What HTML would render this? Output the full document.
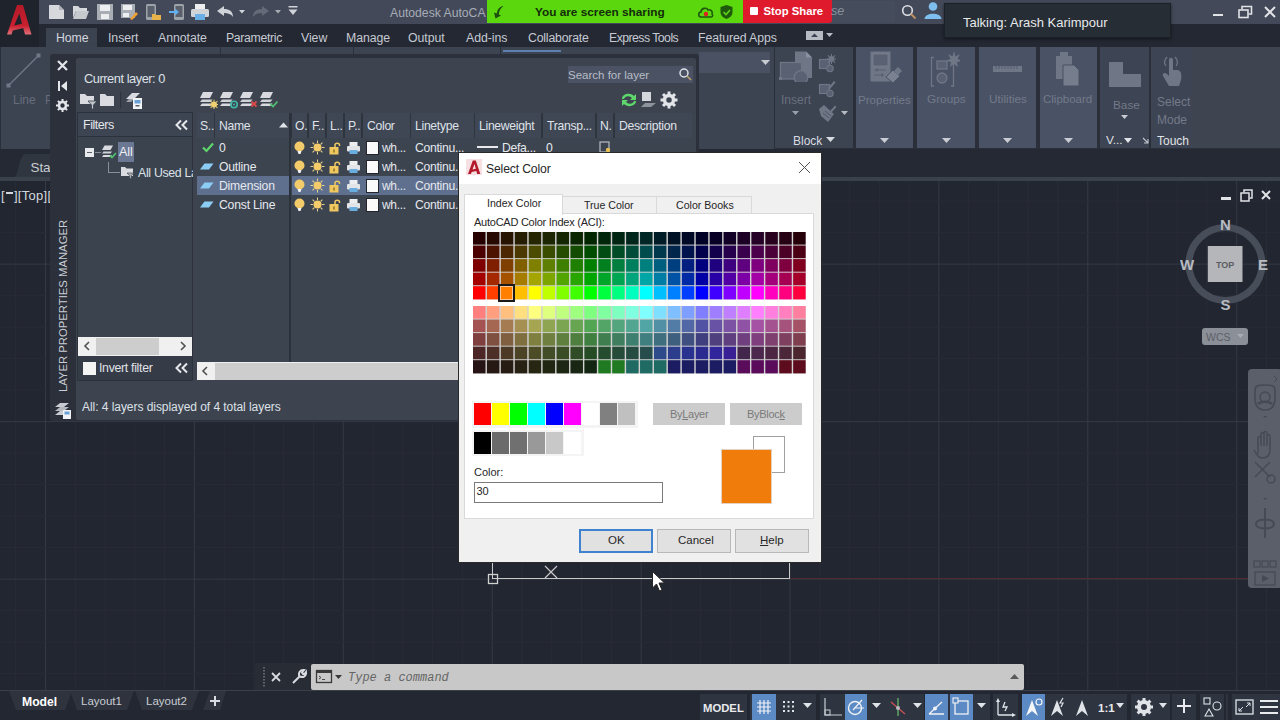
<!DOCTYPE html><html><head><meta charset="utf-8"><style>
html,body{margin:0;padding:0;}
body{width:1280px;height:720px;overflow:hidden;position:relative;background:#222630;font-family:"Liberation Sans",sans-serif;}
div,svg{box-sizing:border-box;}
</style></head><body>
<svg style="position:absolute;left:0px;top:0px;" width="1280" height="720" viewBox="0 0 1280 720"><rect x="15.2" y="181" width="1" height="510" fill="#282c37"/><rect x="74.8" y="181" width="1" height="510" fill="#282c37"/><rect x="104.6" y="181" width="1" height="510" fill="#282c37"/><rect x="134.3" y="181" width="1" height="510" fill="#282c37"/><rect x="164.1" y="181" width="1" height="510" fill="#282c37"/><rect x="45.0" y="181" width="1" height="510" fill="#343945"/><rect x="223.7" y="181" width="1" height="510" fill="#282c37"/><rect x="253.5" y="181" width="1" height="510" fill="#282c37"/><rect x="283.2" y="181" width="1" height="510" fill="#282c37"/><rect x="313.0" y="181" width="1" height="510" fill="#282c37"/><rect x="193.9" y="181" width="1" height="510" fill="#343945"/><rect x="372.6" y="181" width="1" height="510" fill="#282c37"/><rect x="402.4" y="181" width="1" height="510" fill="#282c37"/><rect x="432.1" y="181" width="1" height="510" fill="#282c37"/><rect x="461.9" y="181" width="1" height="510" fill="#282c37"/><rect x="342.8" y="181" width="1" height="510" fill="#343945"/><rect x="521.5" y="181" width="1" height="510" fill="#282c37"/><rect x="551.3" y="181" width="1" height="510" fill="#282c37"/><rect x="581.0" y="181" width="1" height="510" fill="#282c37"/><rect x="610.8" y="181" width="1" height="510" fill="#282c37"/><rect x="491.7" y="181" width="1" height="510" fill="#343945"/><rect x="670.4" y="181" width="1" height="510" fill="#282c37"/><rect x="700.2" y="181" width="1" height="510" fill="#282c37"/><rect x="729.9" y="181" width="1" height="510" fill="#282c37"/><rect x="759.7" y="181" width="1" height="510" fill="#282c37"/><rect x="640.6" y="181" width="1" height="510" fill="#343945"/><rect x="819.3" y="181" width="1" height="510" fill="#282c37"/><rect x="849.1" y="181" width="1" height="510" fill="#282c37"/><rect x="878.8" y="181" width="1" height="510" fill="#282c37"/><rect x="908.6" y="181" width="1" height="510" fill="#282c37"/><rect x="789.5" y="181" width="1" height="510" fill="#343945"/><rect x="968.2" y="181" width="1" height="510" fill="#282c37"/><rect x="998.0" y="181" width="1" height="510" fill="#282c37"/><rect x="1027.7" y="181" width="1" height="510" fill="#282c37"/><rect x="1057.5" y="181" width="1" height="510" fill="#282c37"/><rect x="938.4" y="181" width="1" height="510" fill="#343945"/><rect x="1117.1" y="181" width="1" height="510" fill="#282c37"/><rect x="1146.9" y="181" width="1" height="510" fill="#282c37"/><rect x="1176.6" y="181" width="1" height="510" fill="#282c37"/><rect x="1206.4" y="181" width="1" height="510" fill="#282c37"/><rect x="1087.3" y="181" width="1" height="510" fill="#343945"/><rect x="1266.0" y="181" width="1" height="510" fill="#282c37"/><rect x="1236.2" y="181" width="1" height="510" fill="#343945"/><rect x="0" y="200.6" width="1280" height="1" fill="#282c37"/><rect x="0" y="232.1" width="1280" height="1" fill="#282c37"/><rect x="0" y="295.1" width="1280" height="1" fill="#282c37"/><rect x="0" y="326.6" width="1280" height="1" fill="#282c37"/><rect x="0" y="358.1" width="1280" height="1" fill="#282c37"/><rect x="0" y="389.6" width="1280" height="1" fill="#282c37"/><rect x="0" y="263.6" width="1280" height="1" fill="#343945"/><rect x="0" y="452.6" width="1280" height="1" fill="#282c37"/><rect x="0" y="484.1" width="1280" height="1" fill="#282c37"/><rect x="0" y="515.6" width="1280" height="1" fill="#282c37"/><rect x="0" y="547.1" width="1280" height="1" fill="#282c37"/><rect x="0" y="421.1" width="1280" height="1" fill="#343945"/><rect x="0" y="610.1" width="1280" height="1" fill="#282c37"/><rect x="0" y="641.6" width="1280" height="1" fill="#282c37"/><rect x="0" y="673.1" width="1280" height="1" fill="#282c37"/><rect x="0" y="578.6" width="1280" height="1" fill="#343945"/></svg>
<div style="position:absolute;left:790px;top:578px;width:490px;height:1px;background:#552931;"></div>
<div style="position:absolute;left:492px;top:560px;width:1px;height:19px;background:#c9c9c9;"></div>
<div style="position:absolute;left:789px;top:560px;width:1px;height:19px;background:#c9c9c9;"></div>
<div style="position:absolute;left:492px;top:578px;width:298px;height:1px;background:#c9c9c9;"></div>
<svg style="position:absolute;left:486px;top:572px;" width="14" height="14" viewBox="0 0 14 14"><rect x="2.5" y="2.5" width="9" height="9" fill="none" stroke="#d0d0d0" stroke-width="1.3"/></svg>
<svg style="position:absolute;left:543px;top:564px;" width="16" height="16" viewBox="0 0 16 16"><path d="M2 2 L14 14 M14 2 L2 14" stroke="#c9c9c9" stroke-width="1.2"/></svg>
<div style="position:absolute;left:0px;top:0px;width:1280px;height:24px;background:#434958;"></div>
<div style="position:absolute;left:0px;top:24px;width:1280px;height:23px;background:#232832;"></div>
<div style="position:absolute;left:0px;top:0px;width:39px;height:47px;background:#1f232b;"></div>
<svg style="position:absolute;left:0px;top:0px;" width="39" height="40" viewBox="0 0 39 40"><defs><linearGradient id="lg" x1="0" y1="0" x2="0" y2="1"><stop offset="0" stop-color="#b51a28"/><stop offset="0.7" stop-color="#c9202f"/><stop offset="1" stop-color="#e0707a"/></linearGradient></defs><path d="M7 34.5 L17 5 H23 L31.5 34.5 H25 L23.2 28 L12.8 30.5 L11.5 34.5 Z M14.2 25.5 L22 23.8 L19.3 13.5 Z" fill="url(#lg)" fill-rule="evenodd"/></svg>
<svg style="position:absolute;left:48px;top:4px;" width="18" height="16" viewBox="0 0 18 16"><path d="M1 1 H11 L16 6 V15 H1 Z" fill="#d6d8dc"/><path d="M11 1 V6 H16" fill="#aeb2b8"/></svg>
<svg style="position:absolute;left:72px;top:4px;" width="18" height="16" viewBox="0 0 18 16"><path d="M1 2 H6 L8 4 H15 V7 H4 L1 14 Z" fill="#d6d8dc"/><path d="M4 7 H17 L14 15 H1 Z" fill="#c6c9ce"/></svg>
<svg style="position:absolute;left:96px;top:3px;" width="18" height="18" viewBox="0 0 18 18"><rect x="1" y="1" width="16" height="16" fill="#a9adb4"/><rect x="4" y="2" width="10" height="6" fill="#eceef0"/><rect x="5" y="11" width="8" height="5" fill="#eceef0"/></svg>
<svg style="position:absolute;left:120px;top:3px;" width="18" height="18" viewBox="0 0 18 18"><rect x="1" y="1" width="14" height="14" fill="#a9adb4"/><rect x="3" y="2" width="9" height="5" fill="#eceef0"/><rect x="3" y="10" width="6" height="4" fill="#eceef0"/><path d="M10 16 L16 9 L18 11 L12 17 Z" fill="#f0a030"/></svg>
<svg style="position:absolute;left:144px;top:3px;" width="18" height="18" viewBox="0 0 18 18"><rect x="2" y="1" width="10" height="16" rx="1.5" fill="#9ea3aa"/><rect x="3.5" y="3" width="7" height="11" fill="#5a606b"/><path d="M8 11 H11 L12 12 H17 V17 H8 Z" fill="#e8b24a"/></svg>
<svg style="position:absolute;left:168px;top:3px;" width="18" height="18" viewBox="0 0 18 18"><rect x="6" y="1" width="10" height="16" rx="1.5" fill="#9ea3aa"/><rect x="7.5" y="3" width="7" height="11" fill="#5a606b"/><path d="M1 8 H7 V5.5 L11 9 L7 12.5 V10 H1 Z" fill="#5fb0f0"/></svg>
<svg style="position:absolute;left:190px;top:3px;" width="20" height="18" viewBox="0 0 20 18"><rect x="5" y="1" width="10" height="5" fill="#eceef0"/><rect x="1" y="6" width="18" height="8" rx="1.5" fill="#d0d3d8"/><rect x="5" y="11" width="10" height="6" fill="#6aaee8"/></svg>
<svg style="position:absolute;left:216px;top:5px;" width="18" height="14" viewBox="0 0 18 14"><path d="M1 6 L8 1 V4 C13 4 17 6 17 12 C15 9 12 8 8 8 V11 Z" fill="#d0d3d8"/></svg>
<svg style="position:absolute;left:239px;top:10px;" width="6" height="4" viewBox="0 0 6 4"><path d="M0 0 H6 L3 3.5 Z" fill="#d0d3d8"/></svg>
<svg style="position:absolute;left:251px;top:5px;" width="19" height="14" viewBox="0 0 19 14"><path d="M18 6 L11 1 V4 C6 4 2 6 2 12 C4 9 7 8 11 8 V11 Z" fill="#646b78"/></svg>
<svg style="position:absolute;left:275px;top:10px;" width="6" height="4" viewBox="0 0 6 4"><path d="M0 0 H6 L3 3.5 Z" fill="#a9aeb6"/></svg>
<svg style="position:absolute;left:288px;top:5px;" width="10" height="12" viewBox="0 0 10 12"><rect x="0.5" y="1" width="9" height="1.5" fill="#d0d3d8"/><path d="M0.5 4.5 H9.5 L5 10 Z" fill="#d0d3d8"/></svg>
<div style="position:absolute;left:390px;top:6.67px;font-family:'Liberation Sans',sans-serif;font-size:12.2px;line-height:1;color:#a6acb7;font-weight:400;white-space:nowrap;">Autodesk AutoCA</div>
<div style="position:absolute;left:487px;top:0px;width:256px;height:23px;background:#5bd70e;"></div>
<svg style="position:absolute;left:492px;top:5px;" width="14" height="14" viewBox="0 0 14 14"><path d="M11.5 1 C7 1.5 5 5 5 8.5 L2 7.5 L3.5 13.5 L9 10.5 L6.8 9.6 C7 6 8.5 3 11.5 1 Z" fill="#1d4d0c"/></svg>
<div style="position:absolute;left:535px;top:6.51px;font-family:'Liberation Sans',sans-serif;font-size:11.8px;line-height:1;color:#132c0a;font-weight:700;white-space:nowrap;">You are screen sharing</div>
<svg style="position:absolute;left:697px;top:5px;" width="17" height="14" viewBox="0 0 17 14"><path d="M4 12 C1 12 1 7 4 7 C4 3 10 2 11 5 C14 4 16 7 15 9 C16 10 16 12 14 12 Z" fill="none" stroke="#1f5a0c" stroke-width="1.6"/><circle cx="9" cy="9" r="2.2" fill="#e02020"/></svg>
<svg style="position:absolute;left:719px;top:4px;" width="15" height="16" viewBox="0 0 15 16"><path d="M7.5 1 L13.5 3 V8 C13.5 12 10 14 7.5 15 C5 14 1.5 12 1.5 8 V3 Z" fill="#1f5a0c"/><path d="M4.5 8 L7 10.5 L11 6" stroke="#5fd31b" stroke-width="1.6" fill="none"/></svg>
<div style="position:absolute;left:743px;top:0px;width:89px;height:23px;background:#df1a2d;border-bottom-right-radius:3px;"></div>
<div style="position:absolute;left:750px;top:7px;width:8px;height:8px;background:#ffffff;border-radius:1px;"></div>
<div style="position:absolute;left:763.5px;top:5.93px;font-family:'Liberation Sans',sans-serif;font-size:11.3px;line-height:1;color:#ffffff;font-weight:700;white-space:nowrap;">Stop Share</div>
<div style="position:absolute;left:832px;top:1px;width:63px;height:21px;background:#454c5c;"></div>
<div style="position:absolute;left:831px;top:5.42px;font-family:'Liberation Sans',sans-serif;font-size:12.5px;line-height:1;color:#8a909c;font-weight:400;white-space:nowrap;font-style:italic;">se</div>
<svg style="position:absolute;left:901px;top:4px;" width="16" height="16" viewBox="0 0 16 16"><circle cx="6.5" cy="6.5" r="4.8" fill="none" stroke="#dcdfe4" stroke-width="1.6"/><path d="M10 10 L14.5 14.5" stroke="#c09060" stroke-width="1.8"/></svg>
<svg style="position:absolute;left:923px;top:1px;" width="20" height="19" viewBox="0 0 20 19"><circle cx="10" cy="5.5" r="4.3" fill="#7fbff0"/><path d="M1.5 18 C2 11 18 11 18.5 18 Z" fill="#7fbff0"/></svg>
<div style="position:absolute;left:944px;top:3px;width:227px;height:35px;background:#262d35;border:1px solid #1c2127;box-shadow:0 1px 3px rgba(0,0,0,0.5);"></div>
<div style="position:absolute;left:963px;top:16.00px;font-family:'Liberation Sans',sans-serif;font-size:13px;line-height:1;color:#e6e8ea;font-weight:400;white-space:nowrap;">Talking: Arash Karimpour</div>
<div style="position:absolute;left:1213px;top:14px;width:10px;height:2px;background:#e0e2e6;"></div>
<svg style="position:absolute;left:1238px;top:5px;" width="16" height="14" viewBox="0 0 16 14"><rect x="1" y="5" width="9" height="7.5" fill="none" stroke="#e0e2e6" stroke-width="1.6"/><path d="M4 4.5 V1.5 H13.5 V9 H10.5" fill="none" stroke="#e0e2e6" stroke-width="1.6"/></svg>
<svg style="position:absolute;left:1263px;top:5px;" width="14" height="14" viewBox="0 0 14 14"><path d="M2 2 L12 12 M12 2 L2 12" stroke="#e0e2e6" stroke-width="2"/></svg>
<div style="position:absolute;left:46px;top:28px;width:51px;height:19px;background:#3b4250;"></div>
<div style="position:absolute;left:56px;top:31.59px;font-family:'Liberation Sans',sans-serif;font-size:12.3px;line-height:1;color:#d3d7de;font-weight:400;white-space:nowrap;letter-spacing:-0.05px;">Home</div>
<div style="position:absolute;left:108px;top:31.59px;font-family:'Liberation Sans',sans-serif;font-size:12.3px;line-height:1;color:#c6cad2;font-weight:400;white-space:nowrap;letter-spacing:-0.05px;">Insert</div>
<div style="position:absolute;left:158px;top:31.59px;font-family:'Liberation Sans',sans-serif;font-size:12.3px;line-height:1;color:#c6cad2;font-weight:400;white-space:nowrap;letter-spacing:-0.05px;">Annotate</div>
<div style="position:absolute;left:226px;top:31.59px;font-family:'Liberation Sans',sans-serif;font-size:12.3px;line-height:1;color:#c6cad2;font-weight:400;white-space:nowrap;letter-spacing:-0.35px;">Parametric</div>
<div style="position:absolute;left:301px;top:31.59px;font-family:'Liberation Sans',sans-serif;font-size:12.3px;line-height:1;color:#c6cad2;font-weight:400;white-space:nowrap;letter-spacing:-0.05px;">View</div>
<div style="position:absolute;left:346px;top:31.59px;font-family:'Liberation Sans',sans-serif;font-size:12.3px;line-height:1;color:#c6cad2;font-weight:400;white-space:nowrap;letter-spacing:-0.05px;">Manage</div>
<div style="position:absolute;left:408px;top:31.59px;font-family:'Liberation Sans',sans-serif;font-size:12.3px;line-height:1;color:#c6cad2;font-weight:400;white-space:nowrap;letter-spacing:-0.05px;">Output</div>
<div style="position:absolute;left:466px;top:31.59px;font-family:'Liberation Sans',sans-serif;font-size:12.3px;line-height:1;color:#c6cad2;font-weight:400;white-space:nowrap;letter-spacing:-0.05px;">Add-ins</div>
<div style="position:absolute;left:528px;top:31.59px;font-family:'Liberation Sans',sans-serif;font-size:12.3px;line-height:1;color:#c6cad2;font-weight:400;white-space:nowrap;letter-spacing:-0.2px;">Collaborate</div>
<div style="position:absolute;left:609px;top:31.59px;font-family:'Liberation Sans',sans-serif;font-size:12.3px;line-height:1;color:#c6cad2;font-weight:400;white-space:nowrap;letter-spacing:-0.55px;">Express Tools</div>
<div style="position:absolute;left:698px;top:31.59px;font-family:'Liberation Sans',sans-serif;font-size:12.3px;line-height:1;color:#c6cad2;font-weight:400;white-space:nowrap;letter-spacing:-0.1px;">Featured Apps</div>
<div style="position:absolute;left:806px;top:31px;width:17px;height:9px;background:#b6bac2;"></div>
<svg style="position:absolute;left:810px;top:32px;" width="9" height="6" viewBox="0 0 9 6"><path d="M1 5 L4.5 1.5 L8 5 Z" fill="#3b4150"/></svg>
<svg style="position:absolute;left:826px;top:33px;" width="8" height="5" viewBox="0 0 8 5"><path d="M0 0 H7 L3.5 4 Z" fill="#b6bac2"/></svg>
<div style="position:absolute;left:0px;top:47px;width:1280px;height:102px;background:#2a2f39;"></div>
<div style="position:absolute;left:1px;top:47px;width:773px;height:102px;background:#3c4351;"></div>
<div style="position:absolute;left:775px;top:47px;width:78px;height:101px;background:#3c4351;"></div>
<div style="position:absolute;left:856px;top:47px;width:57px;height:101px;background:#4a5265;"></div>
<div style="position:absolute;left:917px;top:47px;width:58px;height:101px;background:#4a5265;"></div>
<div style="position:absolute;left:979px;top:47px;width:57px;height:101px;background:#4a5265;"></div>
<div style="position:absolute;left:1040px;top:47px;width:57px;height:101px;background:#4a5265;"></div>
<div style="position:absolute;left:1100px;top:47px;width:49px;height:101px;background:#3d4453;"></div>
<div style="position:absolute;left:1151px;top:47px;width:40px;height:101px;background:#3d4453;"></div>
<div style="position:absolute;left:1191px;top:47px;width:89px;height:101px;background:#3e4550;"></div>
<div style="position:absolute;left:503px;top:50px;width:58px;height:2px;background:#5b7fae;"></div>
<div style="position:absolute;left:220px;top:47px;width:1px;height:7px;background:#2a2f39;"></div>
<div style="position:absolute;left:353px;top:47px;width:1px;height:7px;background:#2a2f39;"></div>
<div style="position:absolute;left:500px;top:47px;width:1px;height:7px;background:#2a2f39;"></div>
<svg style="position:absolute;left:6px;top:52px;" width="36" height="38" viewBox="0 0 36 38"><path d="M2.5 33.5 L32.5 3.5" stroke="#717889" stroke-width="1.2"/><rect x="0.5" y="31.5" width="4" height="4" fill="#717889"/><rect x="30.5" y="1.5" width="4" height="4" fill="#717889"/></svg>
<div style="position:absolute;left:13px;top:93.84px;font-family:'Liberation Sans',sans-serif;font-size:12px;line-height:1;color:#666d7c;font-weight:400;white-space:nowrap;">Line</div>
<div style="position:absolute;left:45px;top:93.84px;font-family:'Liberation Sans',sans-serif;font-size:12px;line-height:1;color:#666d7c;font-weight:400;white-space:nowrap;">P</div>
<div style="position:absolute;left:699px;top:52px;width:71px;height:21px;background:#4a5163;"></div>
<svg style="position:absolute;left:761px;top:60px;" width="10" height="6" viewBox="0 0 10 6"><path d="M0 0 H9 L4.5 5 Z" fill="#c8ccd2"/></svg>
<svg style="position:absolute;left:779px;top:50px;" width="36" height="32" viewBox="0 0 36 32"><path d="M16 1.5 H27 L33 7.5 V28 H16 Z" fill="#6f7686"/><path d="M27 1.5 V7.5 H33 Z" fill="#8a90a0"/><rect x="1.5" y="12.5" width="21" height="16.5" fill="#5a6172" stroke="#6f7686" stroke-width="1.3"/><circle cx="22" cy="27.5" r="6.8" fill="#5a6172" stroke="#6f7686" stroke-width="1.3"/><rect x="0" y="27" width="3" height="3" fill="#6f7686"/></svg>
<svg style="position:absolute;left:818px;top:54px;" width="18" height="19" viewBox="0 0 18 19"><rect x="1.5" y="5.5" width="10" height="9" fill="#5a6172" stroke="#6f7686" stroke-width="1.2"/><circle cx="12" cy="14.5" r="3.2" fill="#5a6172" stroke="#6f7686" stroke-width="1.1"/><circle cx="13.5" cy="5" r="3" fill="#6f7686"/><rect x="13" y="0" width="1" height="2" fill="#6f7686" transform="rotate(0 13.5 5)"/><rect x="13" y="0" width="1" height="2" fill="#6f7686" transform="rotate(45 13.5 5)"/><rect x="13" y="0" width="1" height="2" fill="#6f7686" transform="rotate(90 13.5 5)"/><rect x="13" y="0" width="1" height="2" fill="#6f7686" transform="rotate(135 13.5 5)"/><rect x="13" y="0" width="1" height="2" fill="#6f7686" transform="rotate(180 13.5 5)"/><rect x="13" y="0" width="1" height="2" fill="#6f7686" transform="rotate(225 13.5 5)"/><rect x="13" y="0" width="1" height="2" fill="#6f7686" transform="rotate(270 13.5 5)"/><rect x="13" y="0" width="1" height="2" fill="#6f7686" transform="rotate(315 13.5 5)"/></svg>
<svg style="position:absolute;left:818px;top:79px;" width="18" height="19" viewBox="0 0 18 19"><rect x="1.5" y="5.5" width="10" height="9" fill="#5a6172" stroke="#6f7686" stroke-width="1.2"/><circle cx="12" cy="14.5" r="3.2" fill="#5a6172" stroke="#6f7686" stroke-width="1.1"/><path d="M10 9 L16 2 L17.5 3.5 L11.5 10.5 Z" fill="#6f7686"/></svg>
<svg style="position:absolute;left:818px;top:104px;" width="20" height="19" viewBox="0 0 20 19"><path d="M1 5 L6 1 L16 10 L10 18 L3 12 Z" fill="#6f7686"/><path d="M5 9 L11 14 M7 7 L13 12" stroke="#4f5666" stroke-width="1"/><path d="M12 7 L17 1.5 L18.5 3 L13.5 8.5 Z" fill="#6f7686"/></svg>
<svg style="position:absolute;left:841px;top:111px;" width="8" height="5" viewBox="0 0 8 5"><path d="M0 0 H7 L3.5 4 Z" fill="#b8bcc4"/></svg>
<div style="position:absolute;left:781px;top:93.84px;font-family:'Liberation Sans',sans-serif;font-size:12px;line-height:1;color:#686f7e;font-weight:400;white-space:nowrap;">Insert</div>
<svg style="position:absolute;left:792px;top:111px;" width="8" height="5" viewBox="0 0 8 5"><path d="M0 0 H7 L3.5 4 Z" fill="#9aa0aa"/></svg>
<div style="position:absolute;left:793px;top:134.84px;font-family:'Liberation Sans',sans-serif;font-size:12px;line-height:1;color:#d8dce2;font-weight:400;white-space:nowrap;">Block</div>
<svg style="position:absolute;left:826px;top:137px;" width="10" height="6" viewBox="0 0 10 6"><path d="M0 0 H9 L4.5 5 Z" fill="#d8dce2"/></svg>
<svg style="position:absolute;left:869px;top:50px;" width="34" height="38" viewBox="0 0 34 38"><rect x="1.5" y="1.5" width="20" height="30" fill="#6f7686"/><rect x="4" y="4" width="15" height="12" fill="#5a6172" stroke="#7a8190" stroke-width="0.8"/><path d="M5 20 H17 M5 25 H15" stroke="#5a6172" stroke-width="1.2"/><rect x="7" y="18.5" width="2" height="3" fill="#5a6172"/><rect x="12" y="23.5" width="2" height="3" fill="#5a6172"/><path d="M17 27 L24 20 L31 26 L24 33 Z" fill="#7a8190" stroke="#4a5265" stroke-width="1"/><path d="M25 21 L29 17 L33 21 L29 25 Z" fill="#6f7686"/></svg>
<div style="position:absolute;left:858px;top:94.18px;font-family:'Liberation Sans',sans-serif;font-size:11.6px;line-height:1;color:#737a8a;font-weight:400;white-space:nowrap;">Properties</div>
<svg style="position:absolute;left:880px;top:138px;" width="10" height="6" viewBox="0 0 10 6"><path d="M0 0 H9 L4.5 5 Z" fill="#c9ccd2"/></svg>
<svg style="position:absolute;left:928px;top:50px;" width="32" height="38" viewBox="0 0 32 38"><path d="M6 7.5 H3.5 V36 H6 M23 36 H25.5 V7.5" fill="none" stroke="#6f7686" stroke-width="1.3"/><rect x="9" y="11" width="10" height="8" fill="#5a6172" stroke="#6f7686" stroke-width="1.3"/><circle cx="14" cy="28" r="5" fill="#5a6172" stroke="#6f7686" stroke-width="1.3"/><path d="M26 1 L27.5 6.5 L32 4 L29.5 8.8 L34 11 L29 12 L30 17 L26 14 L22 17 L23 12 L18 11 L22.5 8.8 L20 4 L24.5 6.5 Z" fill="#6f7686"/></svg>
<div style="position:absolute;left:927px;top:94.01px;font-family:'Liberation Sans',sans-serif;font-size:11.8px;line-height:1;color:#737a8a;font-weight:400;white-space:nowrap;">Groups</div>
<svg style="position:absolute;left:942px;top:138px;" width="10" height="6" viewBox="0 0 10 6"><path d="M0 0 H9 L4.5 5 Z" fill="#c9ccd2"/></svg>
<svg style="position:absolute;left:993px;top:65px;" width="30" height="8" viewBox="0 0 30 8"><rect x="0" y="1" width="29" height="6" fill="#6f7686"/><path d="M3 1 V4 M6 1 V4 M9 1 V4 M12 1 V4 M15 1 V4 M18 1 V4 M21 1 V4 M24 1 V4" stroke="#4f5768" stroke-width="0.8"/></svg>
<div style="position:absolute;left:989px;top:94.01px;font-family:'Liberation Sans',sans-serif;font-size:11.8px;line-height:1;color:#737a8a;font-weight:400;white-space:nowrap;">Utilities</div>
<svg style="position:absolute;left:1003px;top:138px;" width="10" height="6" viewBox="0 0 10 6"><path d="M0 0 H9 L4.5 5 Z" fill="#c9ccd2"/></svg>
<svg style="position:absolute;left:1055px;top:50px;" width="26" height="38" viewBox="0 0 26 38"><rect x="1" y="6" width="16" height="23" fill="#6f7686"/><rect x="5" y="2" width="8" height="6" fill="#6f7686"/><path d="M8 15 H19 L24 20 V36 H8 Z" fill="#767d8d" stroke="#485063" stroke-width="1"/></svg>
<div style="position:absolute;left:1043px;top:94.27px;font-family:'Liberation Sans',sans-serif;font-size:11.5px;line-height:1;color:#737a8a;font-weight:400;white-space:nowrap;">Clipboard</div>
<svg style="position:absolute;left:1064px;top:138px;" width="10" height="6" viewBox="0 0 10 6"><path d="M0 0 H9 L4.5 5 Z" fill="#c9ccd2"/></svg>
<svg style="position:absolute;left:1108px;top:61px;" width="34" height="27" viewBox="0 0 34 27"><path d="M1 1 H15 V13 H33 V26 H1 Z" fill="#6f7686"/></svg>
<div style="position:absolute;left:1113px;top:100.01px;font-family:'Liberation Sans',sans-serif;font-size:11.8px;line-height:1;color:#737a8a;font-weight:400;white-space:nowrap;">Base</div>
<svg style="position:absolute;left:1121px;top:115px;" width="8" height="5" viewBox="0 0 8 5"><path d="M0 0 H7 L3.5 4 Z" fill="#c9ccd2"/></svg>
<div style="position:absolute;left:1106px;top:135.01px;font-family:'Liberation Sans',sans-serif;font-size:11.8px;line-height:1;color:#e0e3e8;font-weight:400;white-space:nowrap;">V...</div>
<svg style="position:absolute;left:1124px;top:138px;" width="9" height="6" viewBox="0 0 9 6"><path d="M0 0 H8 L4 5 Z" fill="#e0e3e8"/></svg>
<svg style="position:absolute;left:1142px;top:137px;" width="7" height="7" viewBox="0 0 7 7"><path d="M1 1 L5.5 5.5 M6 2 V6 H2" stroke="#c0c4cc" stroke-width="1.1" fill="none"/></svg>
<svg style="position:absolute;left:1160px;top:52px;" width="26" height="36" viewBox="0 0 26 36"><path d="M7 5 C4 8 4 12 6 14 M15 5 C18 8 18 12 16 14" stroke="#6f7686" stroke-width="1.3" fill="none"/><path d="M9 8 C9 5 13 5 13 8 V18 L18 18 C21 19 22 22 21 28 L19 34 H9 L3 24 C2 21 5 20 7 22 L9 24 Z" fill="#6f7686"/></svg>
<div style="position:absolute;left:1157px;top:95.84px;font-family:'Liberation Sans',sans-serif;font-size:12px;line-height:1;color:#737a8a;font-weight:400;white-space:nowrap;">Select</div>
<div style="position:absolute;left:1157px;top:113.84px;font-family:'Liberation Sans',sans-serif;font-size:12px;line-height:1;color:#737a8a;font-weight:400;white-space:nowrap;">Mode</div>
<div style="position:absolute;left:1157px;top:134.84px;font-family:'Liberation Sans',sans-serif;font-size:12px;line-height:1;color:#e0e3e8;font-weight:400;white-space:nowrap;">Touch</div>
<div style="position:absolute;left:0px;top:149px;width:1280px;height:32px;background:#242933;"></div>
<div style="position:absolute;left:220px;top:47px;width:1px;height:7px;background:#2a2f39;"></div>
<div style="position:absolute;left:353px;top:47px;width:1px;height:7px;background:#2a2f39;"></div>
<div style="position:absolute;left:500px;top:47px;width:1px;height:7px;background:#2a2f39;"></div>
<div style="position:absolute;left:0px;top:177px;width:1280px;height:4px;background:#3a404c;"></div>
<svg style="position:absolute;left:0px;top:149px;" width="100" height="32" viewBox="0 0 100 32"><path d="M15 28 C19 22 19 8 25 5 H100 V28 Z" fill="#30363f"/></svg>
<div style="position:absolute;left:30.5px;top:160.57px;font-family:'Liberation Sans',sans-serif;font-size:13.5px;line-height:1;color:#c8ccd4;font-weight:400;white-space:nowrap;letter-spacing:-0.1px;">Start</div>
<div style="position:absolute;left:1px;top:188.50px;font-family:'Liberation Sans',sans-serif;font-size:13px;line-height:1;color:#d4d8de;font-weight:400;white-space:nowrap;letter-spacing:0.3px;">[<span style="display:inline-block;width:9px;"></span>][Top][</div>
<div style="position:absolute;left:6px;top:192px;width:6.5px;height:1.5px;background:#d4d8de;"></div>
<div style="position:absolute;left:1221px;top:197px;width:10px;height:3px;background:#e0e2e6;"></div>
<svg style="position:absolute;left:1240px;top:189px;" width="13" height="13" viewBox="0 0 13 13"><rect x="1" y="4" width="8" height="8" fill="none" stroke="#e0e2e6" stroke-width="1.5"/><path d="M4 3.5 V1 H12 V9 H9.5" fill="none" stroke="#e0e2e6" stroke-width="1.5"/></svg>
<svg style="position:absolute;left:1260px;top:189px;" width="12" height="12" viewBox="0 0 12 12"><path d="M2 2 L10 10 M10 2 L2 10" stroke="#e0e2e6" stroke-width="2"/></svg>
<svg style="position:absolute;left:1180px;top:215px;" width="92" height="98" viewBox="0 0 92 98"><circle cx="45.5" cy="49" r="36.5" fill="none" stroke="#474d59" stroke-width="7"/><rect x="27.8" y="31" width="34.7" height="36" fill="#b5b6b9"/><text x="45.2" y="53" font-family="Liberation Sans" font-size="9" font-weight="700" fill="#5a5d63" text-anchor="middle">TOP</text><text x="45.5" y="15" font-family="Liberation Sans" font-size="15" font-weight="700" fill="#b8bbc2" text-anchor="middle">N</text><text x="45.5" y="95" font-family="Liberation Sans" font-size="15" font-weight="700" fill="#b8bbc2" text-anchor="middle">S</text><text x="7" y="55" font-family="Liberation Sans" font-size="15" font-weight="700" fill="#b8bbc2" text-anchor="middle">W</text><text x="83" y="55" font-family="Liberation Sans" font-size="15" font-weight="700" fill="#b8bbc2" text-anchor="middle">E</text></svg>
<div style="position:absolute;left:1202px;top:328px;width:46px;height:17px;background:#8b8f97;border-radius:3px;"></div>
<div style="position:absolute;left:1206px;top:332.11px;font-family:'Liberation Sans',sans-serif;font-size:10.5px;line-height:1;color:#5c6068;font-weight:400;white-space:nowrap;">WCS</div>
<svg style="position:absolute;left:1237px;top:334px;" width="8" height="5" viewBox="0 0 8 5"><path d="M0 0 H7 L3.5 4 Z" fill="#a8acb2"/></svg>
<div style="position:absolute;left:1248px;top:369px;width:34px;height:219px;background:#5b5f69;border-radius:4px;"></div>
<svg style="position:absolute;left:1250px;top:376px;" width="30" height="210" viewBox="0 0 30 210"><path d="M5 14 C5 10 8 9 15 9 C22 9 25 10 25 14 V22 C25 30 21 34 15 34 C9 34 5 30 5 22 Z" fill="none" stroke="#454a53" stroke-width="1.6"/><circle cx="15" cy="21" r="5" fill="none" stroke="#454a53" stroke-width="1.4"/><path d="M8 28 C11 25 19 25 22 28" stroke="#454a53" stroke-width="2.5" fill="none"/><path d="M24 0 L27 3 L24 6" stroke="#454a53" stroke-width="1" fill="none"/><path d="M13 40 H17 L15 42 Z" fill="#454a53"/><path d="M8 78 V62 C8 60 11 60 11 62 V70 V58 C11 56 14 56 14 58 V70 V57 C14 55 17 55 17 57 V70 V60 C17 58 20 58 20 60 V74 C20 80 16 82 12 82 C9 82 6 78 4 74" fill="none" stroke="#454a53" stroke-width="1.5"/><path d="M5 86 L20 101 M20 86 L5 101" stroke="#454a53" stroke-width="1.5"/><circle cx="21" cy="103" r="4" fill="none" stroke="#454a53" stroke-width="1.5"/><path d="M13 122 H17 L15 124 Z" fill="#454a53"/><path d="M15 132 V162 M6 148 C6 142 24 142 24 148 C24 154 6 154 6 148" fill="none" stroke="#454a53" stroke-width="2"/><path d="M13 144 H17 L15 146 Z" fill="#454a53"/><rect x="4" y="185" width="6" height="6" fill="none" stroke="#454a53" stroke-width="1.2"/><rect x="12" y="185" width="6" height="6" fill="none" stroke="#454a53" stroke-width="1.2"/><rect x="20" y="185" width="6" height="6" fill="none" stroke="#454a53" stroke-width="1.2"/><rect x="5" y="196" width="20" height="13" fill="none" stroke="#454a53" stroke-width="1.3"/><path d="M12 199 L19 202.5 L12 206 Z" fill="#454a53"/></svg>
<div style="position:absolute;left:255px;top:663px;width:56px;height:27px;background:#272c35;"></div>
<svg style="position:absolute;left:262px;top:666px;" width="4" height="22" viewBox="0 0 4 22"><path d="M2 1 V21" stroke="#9aa0aa" stroke-width="1" stroke-dasharray="1.5 1.5"/></svg>
<svg style="position:absolute;left:270px;top:671px;" width="12" height="12" viewBox="0 0 12 12"><path d="M2 2 L10 10 M10 2 L2 10" stroke="#d8dbe0" stroke-width="1.8"/></svg>
<svg style="position:absolute;left:290px;top:668px;" width="17" height="17" viewBox="0 0 17 17"><path d="M3 15 L10 8 M9.5 8.5 C8 5 10 1.5 14 2 L12 4.5 L13 6 L15 5.5 L16 4 C16.5 8 13 10 10 8.5" stroke="#d8dbe0" stroke-width="2" fill="none"/></svg>
<div style="position:absolute;left:311px;top:664px;width:713px;height:26px;background:#c8c8c8;border-radius:2px;"></div>
<svg style="position:absolute;left:315px;top:668px;" width="30" height="18" viewBox="0 0 30 18"><rect x="1.5" y="2.5" width="15" height="12" fill="none" stroke="#3a3a3a" stroke-width="1.3"/><rect x="1.5" y="2.5" width="15" height="2.5" fill="#3a3a3a"/><path d="M4 8 L6 9.5 L4 11 M7 11.5 H10" stroke="#3a3a3a" stroke-width="0.9" fill="none"/><path d="M20 7 H27 L23.5 11 Z" fill="#3a3a3a"/></svg>
<div style="position:absolute;left:348px;top:671.84px;font-family:'Liberation Mono',sans-serif;font-size:12px;line-height:1;color:#666666;font-weight:400;white-space:nowrap;font-style:italic;">Type a command</div>
<svg style="position:absolute;left:1010px;top:673px;" width="10" height="7" viewBox="0 0 10 7"><path d="M0 6 H9 L4.5 1 Z" fill="#5a5a5a"/></svg>
<div style="position:absolute;left:0px;top:690px;width:1280px;height:30px;background:#222731;"></div>
<div style="position:absolute;left:0px;top:690px;width:1280px;height:1px;background:#3a3f49;"></div>
<div style="position:absolute;left:9px;top:691px;width:63px;height:19px;background:#2e333d;clip-path:polygon(0 0,100% 0,89% 100%,11% 100%);"></div>
<div style="position:absolute;left:70px;top:691px;width:64px;height:19px;background:#2e333d;clip-path:polygon(0 0,100% 0,89% 100%,11% 100%);"></div>
<div style="position:absolute;left:135px;top:691px;width:64px;height:19px;background:#2e333d;clip-path:polygon(0 0,100% 0,89% 100%,11% 100%);"></div>
<div style="position:absolute;left:22px;top:695.67px;font-family:'Liberation Sans',sans-serif;font-size:12.2px;line-height:1;color:#ffffff;font-weight:700;white-space:nowrap;">Model</div>
<div style="position:absolute;left:81px;top:696.27px;font-family:'Liberation Sans',sans-serif;font-size:11.5px;line-height:1;color:#c9cdd4;font-weight:400;white-space:nowrap;">Layout1</div>
<div style="position:absolute;left:146px;top:696.27px;font-family:'Liberation Sans',sans-serif;font-size:11.5px;line-height:1;color:#c9cdd4;font-weight:400;white-space:nowrap;">Layout2</div>
<div style="position:absolute;left:203px;top:691px;width:23px;height:19px;background:#2e333d;clip-path:polygon(30% 0,100% 0,75% 100%,0 100%);"></div>
<svg style="position:absolute;left:209px;top:695px;" width="12" height="12" viewBox="0 0 12 12"><path d="M6 1 V11 M1 6 H11" stroke="#d8dbe0" stroke-width="2"/></svg>
<div style="position:absolute;left:700px;top:694px;width:47px;height:26px;background:#2e3440;"></div>
<div style="position:absolute;left:703px;top:703.43px;font-family:'Liberation Sans',sans-serif;font-size:11.3px;line-height:1;color:#e8eaee;font-weight:700;white-space:nowrap;">MODEL</div>
<div style="position:absolute;left:750px;top:694px;width:66px;height:26px;background:#2e3440;"></div>
<div style="position:absolute;left:752px;top:694px;width:24px;height:26px;background:#5b8ac4;"></div>
<svg style="position:absolute;left:752px;top:694px;" width="24" height="26" viewBox="0 0 24 26"><path d="M8 6 V20 M12 6 V20 M16 6 V20 M5 9 H19 M5 13 H19 M5 17 H19" stroke="#f0f2f5" stroke-width="1.2"/></svg>
<svg style="position:absolute;left:778px;top:696px;" width="22" height="22" viewBox="0 0 22 22"><rect x="5.0" y="5.0" width="2" height="2" fill="#e0e3e8"/><rect x="5.0" y="9.5" width="2" height="2" fill="#e0e3e8"/><rect x="5.0" y="14.0" width="2" height="2" fill="#e0e3e8"/><rect x="9.5" y="5.0" width="2" height="2" fill="#e0e3e8"/><rect x="9.5" y="9.5" width="2" height="2" fill="#e0e3e8"/><rect x="9.5" y="14.0" width="2" height="2" fill="#e0e3e8"/><rect x="14.0" y="5.0" width="2" height="2" fill="#e0e3e8"/><rect x="14.0" y="9.5" width="2" height="2" fill="#e0e3e8"/><rect x="14.0" y="14.0" width="2" height="2" fill="#e0e3e8"/></svg>
<svg style="position:absolute;left:803px;top:703px;" width="10" height="6" viewBox="0 0 10 6"><path d="M0 0 H9 L4.5 5 Z" fill="#e0e3e8"/></svg>
<div style="position:absolute;left:820px;top:694px;width:104px;height:26px;background:#2e3440;"></div>
<svg style="position:absolute;left:820px;top:694px;" width="24" height="26" viewBox="0 0 24 26"><path d="M5 4 V21 H22" stroke="#c8ccd2" stroke-width="1.2" fill="none"/><rect x="5" y="16" width="5" height="5" fill="none" stroke="#c8ccd2" stroke-width="1"/></svg>
<div style="position:absolute;left:845px;top:694px;width:22px;height:26px;background:#5b8ac4;"></div>
<svg style="position:absolute;left:845px;top:694px;" width="22" height="26" viewBox="0 0 22 26"><circle cx="10" cy="14" r="6.5" fill="none" stroke="#f0f2f5" stroke-width="1.4"/><path d="M8 16 L17 6 M10 14 H19" stroke="#f0f2f5" stroke-width="1.2"/></svg>
<svg style="position:absolute;left:872px;top:703px;" width="10" height="6" viewBox="0 0 10 6"><path d="M0 0 H9 L4.5 5 Z" fill="#e0e3e8"/></svg>
<svg style="position:absolute;left:887px;top:694px;" width="22" height="26" viewBox="0 0 22 26"><path d="M11 4 V22" stroke="#6cc070" stroke-width="1.2"/><path d="M4 8 L18 20" stroke="#d05050" stroke-width="1.2"/><circle cx="11" cy="14" r="2" fill="#b8bcc4"/></svg>
<svg style="position:absolute;left:913px;top:703px;" width="10" height="6" viewBox="0 0 10 6"><path d="M0 0 H9 L4.5 5 Z" fill="#e0e3e8"/></svg>
<div style="position:absolute;left:925px;top:694px;width:65px;height:26px;background:#2e3440;"></div>
<div style="position:absolute;left:925px;top:694px;width:23px;height:26px;background:#5b8ac4;"></div>
<svg style="position:absolute;left:925px;top:694px;" width="23" height="26" viewBox="0 0 23 26"><path d="M4 20 H19 M4 20 L17 8" stroke="#f0f2f5" stroke-width="1.3"/><circle cx="10" cy="14.5" r="2" fill="#f0f2f5"/></svg>
<div style="position:absolute;left:950px;top:694px;width:23px;height:26px;background:#5b8ac4;"></div>
<svg style="position:absolute;left:950px;top:694px;" width="23" height="26" viewBox="0 0 23 26"><rect x="5" y="7" width="13" height="13" fill="none" stroke="#f0f2f5" stroke-width="1.3"/><rect x="3" y="4" width="5" height="5" fill="#5b8ac4" stroke="#f0f2f5" stroke-width="1.1"/></svg>
<svg style="position:absolute;left:977px;top:703px;" width="10" height="6" viewBox="0 0 10 6"><path d="M0 0 H9 L4.5 5 Z" fill="#e0e3e8"/></svg>
<div style="position:absolute;left:993px;top:694px;width:25px;height:26px;background:#2e3440;"></div>
<svg style="position:absolute;left:993px;top:694px;" width="25" height="26" viewBox="0 0 25 26"><path d="M5 21 V6 M5 21 H21" stroke="#e0e3e8" stroke-width="1.3" fill="none"/><path d="M3 8 L5 4 L7 8 Z M19 19 L23 21 L19 23 Z" fill="#e0e3e8"/><path d="M12 8 L10 13 H14 L12 17" stroke="#e0e3e8" stroke-width="1.3" fill="none"/></svg>
<div style="position:absolute;left:1022px;top:694px;width:105px;height:26px;background:#2e3440;"></div>
<div style="position:absolute;left:1022px;top:694px;width:23px;height:26px;background:#5b8ac4;"></div>
<svg style="position:absolute;left:1022px;top:694px;" width="23" height="26" viewBox="0 0 23 26"><path d="M4 22 L10 6 L16 22 L10 17 Z" fill="#f5f6f8"/><circle cx="17" cy="8" r="3" fill="none" stroke="#f5f6f8" stroke-width="1.2"/></svg>
<svg style="position:absolute;left:1047px;top:694px;" width="23" height="26" viewBox="0 0 23 26"><path d="M4 22 L10 6 L16 22 L10 17 Z" fill="#e0e3e8"/><path d="M16 4 L13 9 H16 L14 13" stroke="#e0e3e8" stroke-width="1.2" fill="none"/></svg>
<svg style="position:absolute;left:1071px;top:694px;" width="23" height="26" viewBox="0 0 23 26"><path d="M5 22 L11 6 L17 22 L11 17 Z" fill="#e0e3e8"/></svg>
<div style="position:absolute;left:1098px;top:703.27px;font-family:'Liberation Sans',sans-serif;font-size:11.5px;line-height:1;color:#e8eaee;font-weight:700;white-space:nowrap;">1:1</div>
<svg style="position:absolute;left:1116px;top:703px;" width="9" height="6" viewBox="0 0 9 6"><path d="M0 0 H8 L4 5 Z" fill="#e0e3e8"/></svg>
<div style="position:absolute;left:1131px;top:694px;width:39px;height:26px;background:#2e3440;"></div>
<svg style="position:absolute;left:1133px;top:696px;" width="22" height="22" viewBox="0 0 22 22"><circle cx="11" cy="11" r="5" fill="none" stroke="#e0e3e8" stroke-width="4"/><rect x="9.5" y="2" width="3" height="4" fill="#e0e3e8" transform="rotate(0 11 11)"/><rect x="9.5" y="2" width="3" height="4" fill="#e0e3e8" transform="rotate(45 11 11)"/><rect x="9.5" y="2" width="3" height="4" fill="#e0e3e8" transform="rotate(90 11 11)"/><rect x="9.5" y="2" width="3" height="4" fill="#e0e3e8" transform="rotate(135 11 11)"/><rect x="9.5" y="2" width="3" height="4" fill="#e0e3e8" transform="rotate(180 11 11)"/><rect x="9.5" y="2" width="3" height="4" fill="#e0e3e8" transform="rotate(225 11 11)"/><rect x="9.5" y="2" width="3" height="4" fill="#e0e3e8" transform="rotate(270 11 11)"/><rect x="9.5" y="2" width="3" height="4" fill="#e0e3e8" transform="rotate(315 11 11)"/></svg>
<svg style="position:absolute;left:1159px;top:703px;" width="9" height="6" viewBox="0 0 9 6"><path d="M0 0 H8 L4 5 Z" fill="#e0e3e8"/></svg>
<div style="position:absolute;left:1172px;top:694px;width:24px;height:26px;background:#2e3440;"></div>
<svg style="position:absolute;left:1175px;top:697px;" width="18" height="18" viewBox="0 0 18 18"><path d="M9 2 V16 M2 9 H16" stroke="#e8eaee" stroke-width="2"/></svg>
<div style="position:absolute;left:1200px;top:694px;width:24px;height:26px;background:#2e3440;"></div>
<svg style="position:absolute;left:1200px;top:694px;" width="24" height="26" viewBox="0 0 24 26"><rect x="4" y="4" width="6" height="6" fill="none" stroke="#e0e3e8" stroke-width="1.1"/><circle cx="17" cy="12" r="4" fill="none" stroke="#e0e3e8" stroke-width="1.1"/><path d="M5 22 L9 15 L13 22 Z" fill="none" stroke="#e0e3e8" stroke-width="1.1"/></svg>
<div style="position:absolute;left:1226px;top:694px;width:2px;height:26px;background:#2e3440;"></div>
<div style="position:absolute;left:1232px;top:694px;width:48px;height:26px;background:#2e3440;"></div>
<svg style="position:absolute;left:1234px;top:698px;" width="22" height="18" viewBox="0 0 22 18"><rect x="2" y="2" width="17" height="14" fill="none" stroke="#e0e3e8" stroke-width="1.3"/><path d="M5 13 L9 9 M5 13 V10 M5 13 H8 M16 5 L12 9 M16 5 V8 M16 5 H13" stroke="#e0e3e8" stroke-width="1"/></svg>
<svg style="position:absolute;left:1259px;top:697px;" width="20" height="20" viewBox="0 0 20 20"><path d="M1 4 H19 M1 10 H19 M1 16 H19" stroke="#e8eaee" stroke-width="2.2"/></svg>
<div style="position:absolute;left:50px;top:54px;width:649px;height:367px;background:#2b303b;border-radius:3px;"></div>
<div style="position:absolute;left:76px;top:58px;width:620px;height:362px;background:#3d4450;border-radius:2px;"></div>
<svg style="position:absolute;left:56px;top:59px;" width="13" height="13" viewBox="0 0 13 13"><path d="M2 2 L11 11 M11 2 L2 11" stroke="#e4e6ea" stroke-width="2.2"/></svg>
<svg style="position:absolute;left:57px;top:80px;" width="12" height="12" viewBox="0 0 12 12"><rect x="1" y="1" width="2" height="10" fill="#e4e6ea"/><path d="M10 1 L4 6 L10 11 Z" fill="#e4e6ea"/></svg>
<svg style="position:absolute;left:56px;top:99px;" width="13" height="13" viewBox="0 0 13 13"><circle cx="6.5" cy="6.5" r="3.5" fill="none" stroke="#e4e6ea" stroke-width="2.6"/><rect x="5.5" y="0" width="2" height="3" fill="#e4e6ea" transform="rotate(0 6.5 6.5)"/><rect x="5.5" y="0" width="2" height="3" fill="#e4e6ea" transform="rotate(45 6.5 6.5)"/><rect x="5.5" y="0" width="2" height="3" fill="#e4e6ea" transform="rotate(90 6.5 6.5)"/><rect x="5.5" y="0" width="2" height="3" fill="#e4e6ea" transform="rotate(135 6.5 6.5)"/><rect x="5.5" y="0" width="2" height="3" fill="#e4e6ea" transform="rotate(180 6.5 6.5)"/><rect x="5.5" y="0" width="2" height="3" fill="#e4e6ea" transform="rotate(225 6.5 6.5)"/><rect x="5.5" y="0" width="2" height="3" fill="#e4e6ea" transform="rotate(270 6.5 6.5)"/><rect x="5.5" y="0" width="2" height="3" fill="#e4e6ea" transform="rotate(315 6.5 6.5)"/></svg>
<div style="position:absolute;left:63px;top:306px;width:0;height:0;"><div style="position:absolute;left:0;top:0;transform:translate(-50%,-50%) rotate(-90deg);font-family:'Liberation Sans',sans-serif;font-size:11.3px;line-height:12px;color:#c9cdd4;white-space:nowrap;letter-spacing:0px;">LAYER PROPERTIES MANAGER</div></div>
<svg style="position:absolute;left:54px;top:402px;" width="18" height="17" viewBox="0 0 18 17"><path d="M1 5 L6 1 H15 L10 5 Z" fill="#c8ccd2"/><path d="M1 9 L6 5 H15 L10 9 Z" fill="#b4b8c0"/><path d="M1 13 L6 9 H15 L10 13 Z" fill="#c8ccd2"/><rect x="9" y="8" width="8" height="9" fill="#f0f2f5"/><rect x="10.5" y="9.5" width="5" height="3" fill="#6aa0d8"/></svg>
<div style="position:absolute;left:84px;top:73.16px;font-family:'Liberation Sans',sans-serif;font-size:12.8px;line-height:1;color:#dde1e7;font-weight:400;white-space:nowrap;letter-spacing:-0.45px;">Current layer: 0</div>
<div style="position:absolute;left:568px;top:66px;width:125px;height:17px;background:#4a5264;"></div>
<div style="position:absolute;left:568px;top:70.27px;font-family:'Liberation Sans',sans-serif;font-size:11.5px;line-height:1;color:#b9bdc6;font-weight:400;white-space:nowrap;">Search for layer</div>
<svg style="position:absolute;left:678px;top:67px;" width="15" height="15" viewBox="0 0 15 15"><circle cx="6" cy="6" r="4" fill="none" stroke="#dfe2e7" stroke-width="1.5"/><path d="M9 9 L13 13" stroke="#c0a070" stroke-width="1.6"/></svg>
<svg style="position:absolute;left:79px;top:92px;" width="19" height="17" viewBox="0 0 19 17"><path d="M1 2 H6 L8 4 H15 V12 H1 Z" fill="#d9dbe0"/><path d="M9 9 H18 L14.5 13 V17 H12.5 V13 Z" fill="#c0c3c8" stroke="#3b4250" stroke-width="0.8"/></svg>
<svg style="position:absolute;left:99px;top:92px;" width="17" height="15" viewBox="0 0 17 15"><path d="M1 2 H6 L8 4 H15 V14 H1 Z" fill="#d9dbe0"/></svg>
<div style="position:absolute;left:120px;top:92px;width:1px;height:16px;background:#2e343f;"></div>
<svg style="position:absolute;left:125px;top:91px;" width="20" height="18" viewBox="0 0 20 18"><path d="M1 8 L7 2 H15 L9 8 Z" fill="#d9dbe0"/><path d="M1 11 L4 8 H9 L6 11 Z" fill="#9ca0a8"/><rect x="8" y="7" width="9" height="11" fill="#f2f4f6"/><rect x="9.5" y="9" width="6" height="3.5" fill="#6aa0d8"/><rect x="10.5" y="14" width="4" height="1.5" fill="#5a606b"/></svg>
<svg style="position:absolute;left:199px;top:91px;" width="19" height="18" viewBox="0 0 19 18"><path d="M4 1 H14 L11 7 H1 Z" fill="#d8dadf"/><path d="M1 11 L3 8.5 H13.5 L11.5 11 Z" fill="#cfd2d6"/><path d="M1 15 L3 12.5 H13.5 L11.5 15 Z" fill="#d8dadf"/><circle cx="15" cy="13.5" r="3" fill="#f0d070"/><rect x="14.5" y="8.7" width="1" height="2" fill="#f0d070" transform="rotate(0 15 13.5)"/><rect x="14.5" y="8.7" width="1" height="2" fill="#f0d070" transform="rotate(45 15 13.5)"/><rect x="14.5" y="8.7" width="1" height="2" fill="#f0d070" transform="rotate(90 15 13.5)"/><rect x="14.5" y="8.7" width="1" height="2" fill="#f0d070" transform="rotate(135 15 13.5)"/><rect x="14.5" y="8.7" width="1" height="2" fill="#f0d070" transform="rotate(180 15 13.5)"/><rect x="14.5" y="8.7" width="1" height="2" fill="#f0d070" transform="rotate(225 15 13.5)"/><rect x="14.5" y="8.7" width="1" height="2" fill="#f0d070" transform="rotate(270 15 13.5)"/><rect x="14.5" y="8.7" width="1" height="2" fill="#f0d070" transform="rotate(315 15 13.5)"/></svg>
<svg style="position:absolute;left:219px;top:91px;" width="19" height="18" viewBox="0 0 19 18"><path d="M4 1 H14 L11 7 H1 Z" fill="#d8dadf"/><path d="M1 11 L3 8.5 H13.5 L11.5 11 Z" fill="#cfd2d6"/><path d="M1 15 L3 12.5 H13.5 L11.5 15 Z" fill="#d8dadf"/><circle cx="15" cy="13.5" r="3.2" fill="none" stroke="#40b8a8" stroke-width="1.6"/><circle cx="15" cy="13.5" r="1" fill="#40b8a8"/></svg>
<svg style="position:absolute;left:239px;top:91px;" width="19" height="18" viewBox="0 0 19 18"><path d="M4 1 H14 L11 7 H1 Z" fill="#d8dadf"/><path d="M1 11 L3 8.5 H13.5 L11.5 11 Z" fill="#cfd2d6"/><path d="M1 15 L3 12.5 H13.5 L11.5 15 Z" fill="#d8dadf"/><path d="M12.5 10.5 L17.5 15.5 M17.5 10.5 L12.5 15.5" stroke="#e04848" stroke-width="1.8"/></svg>
<svg style="position:absolute;left:259px;top:91px;" width="19" height="18" viewBox="0 0 19 18"><path d="M4 1 H14 L11 7 H1 Z" fill="#d8dadf"/><path d="M1 11 L3 8.5 H13.5 L11.5 11 Z" fill="#cfd2d6"/><path d="M1 15 L3 12.5 H13.5 L11.5 15 Z" fill="#d8dadf"/><path d="M11.5 13 L14 15.5 L18.5 10.5" stroke="#50c070" stroke-width="1.8" fill="none"/></svg>
<svg style="position:absolute;left:619px;top:91px;" width="20" height="18" viewBox="0 0 20 18"><path d="M3 8 C3 3 11 1 15 5 L17 3 V9 H11 L13 7 C10 4 6 5 5 8 Z" fill="#5ed86a"/><path d="M17 10 C17 15 9 17 5 13 L3 15 V9 H9 L7 11 C10 14 14 13 15 10 Z" fill="#5ed86a"/></svg>
<svg style="position:absolute;left:640px;top:91px;" width="17" height="17" viewBox="0 0 17 17"><rect x="2" y="1" width="9" height="9" fill="#d4d7dc"/><path d="M5 12 H16 L11 16 H1 Z" fill="#8d929b"/></svg>
<svg style="position:absolute;left:660px;top:91px;" width="18" height="18" viewBox="0 0 18 18"><circle cx="9" cy="9" r="4.5" fill="none" stroke="#e2e4e8" stroke-width="3.5"/><rect x="7.5" y="0.5" width="3" height="4" fill="#e2e4e8" transform="rotate(0 9 9)"/><rect x="7.5" y="0.5" width="3" height="4" fill="#e2e4e8" transform="rotate(45 9 9)"/><rect x="7.5" y="0.5" width="3" height="4" fill="#e2e4e8" transform="rotate(90 9 9)"/><rect x="7.5" y="0.5" width="3" height="4" fill="#e2e4e8" transform="rotate(135 9 9)"/><rect x="7.5" y="0.5" width="3" height="4" fill="#e2e4e8" transform="rotate(180 9 9)"/><rect x="7.5" y="0.5" width="3" height="4" fill="#e2e4e8" transform="rotate(225 9 9)"/><rect x="7.5" y="0.5" width="3" height="4" fill="#e2e4e8" transform="rotate(270 9 9)"/><rect x="7.5" y="0.5" width="3" height="4" fill="#e2e4e8" transform="rotate(315 9 9)"/></svg>
<div style="position:absolute;left:77px;top:112px;width:116px;height:269px;background:#2c323c;"></div>
<div style="position:absolute;left:78px;top:113px;width:114px;height:267px;background:#3b434f;"></div>
<div style="position:absolute;left:78px;top:113px;width:114px;height:23px;background:#3d4452;"></div>
<div style="position:absolute;left:78px;top:136px;width:114px;height:1px;background:#2c323c;"></div>
<div style="position:absolute;left:83px;top:118.92px;font-family:'Liberation Sans',sans-serif;font-size:12.5px;line-height:1;color:#e4e7ec;font-weight:400;white-space:nowrap;letter-spacing:-0.45px;">Filters</div>
<svg style="position:absolute;left:175px;top:119px;" width="14" height="12" viewBox="0 0 14 12"><path d="M6 1.5 L1.5 6 L6 10.5 M12 1.5 L7.5 6 L12 10.5" stroke="#e6e8ec" stroke-width="2" fill="none"/></svg>
<div style="position:absolute;left:85px;top:148px;width:9px;height:9px;background:#e8eaee;"></div>
<div style="position:absolute;left:87px;top:152px;width:5px;height:1px;background:#5a606b;"></div>
<div style="position:absolute;left:95px;top:152px;width:6px;height:1px;background:#8a909a;"></div>
<svg style="position:absolute;left:101px;top:144px;" width="16" height="16" viewBox="0 0 16 16"><path d="M3.5 1.5 H12 L9.5 6 H1 Z" fill="#d8dadf"/><path d="M1 9.5 L2.5 7.5 H11 L9.5 9.5 Z" fill="#cfd2d6"/><path d="M1 13 L2.5 11 H11 L9.5 13 Z" fill="#d8dadf"/><path d="M9 11.5 L11 13.5 L15 9" stroke="#50c070" stroke-width="1.8" fill="none"/></svg>
<div style="position:absolute;left:118px;top:142px;width:16px;height:20px;background:#6a7894;"></div>
<div style="position:absolute;left:119px;top:146.42px;font-family:'Liberation Sans',sans-serif;font-size:12.5px;line-height:1;color:#eef0f4;font-weight:400;white-space:nowrap;">All</div>
<div style="position:absolute;left:108px;top:162px;width:1px;height:10px;background:#8a909a;"></div>
<div style="position:absolute;left:108px;top:172px;width:12px;height:1px;background:#8a909a;"></div>
<svg style="position:absolute;left:120px;top:165px;" width="15" height="14" viewBox="0 0 15 14"><path d="M1 2 H5 L6.5 3.5 H13 V11 H1 Z" fill="#d9dbe0"/><path d="M7 8 H14 L11.5 10.5 V13.5 H9.5 V10.5 Z" fill="#a8acb2" stroke="#363c48" stroke-width="0.6"/></svg>
<div style="position:absolute;left:138px;top:166.59px;font-family:'Liberation Sans',sans-serif;font-size:12.3px;line-height:1;color:#dde1e7;font-weight:400;white-space:nowrap;letter-spacing:-0.3px;">All Used La</div>
<div style="position:absolute;left:78px;top:337px;width:114px;height:18.5px;background:#f0f0f0;"></div>
<div style="position:absolute;left:96px;top:338px;width:63px;height:17px;background:#cdcdcd;"></div>
<svg style="position:absolute;left:82px;top:340px;" width="10" height="12" viewBox="0 0 10 12"><path d="M7 2 L3 6 L7 10" stroke="#505050" stroke-width="1.6" fill="none"/></svg>
<svg style="position:absolute;left:178px;top:340px;" width="10" height="12" viewBox="0 0 10 12"><path d="M3 2 L7 6 L3 10" stroke="#505050" stroke-width="1.6" fill="none"/></svg>
<div style="position:absolute;left:78px;top:355.5px;width:114px;height:24.5px;background:#353b47;"></div>
<div style="position:absolute;left:83px;top:362px;width:13px;height:13px;background:#f4f4f4;"></div>
<div style="position:absolute;left:99px;top:362.09px;font-family:'Liberation Sans',sans-serif;font-size:12.3px;line-height:1;color:#e0e3e8;font-weight:400;white-space:nowrap;letter-spacing:-0.3px;">Invert filter</div>
<svg style="position:absolute;left:175px;top:362px;" width="14" height="12" viewBox="0 0 14 12"><path d="M6 1.5 L1.5 6 L6 10.5 M12 1.5 L7.5 6 L12 10.5" stroke="#e6e8ec" stroke-width="2" fill="none"/></svg>
<div style="position:absolute;left:193px;top:113px;width:4px;height:267px;background:#3d4450;"></div>
<div style="position:absolute;left:197px;top:113px;width:499px;height:248.5px;background:#3c4450;"></div>
<div style="position:absolute;left:197px;top:113px;width:495px;height:25px;background:#2f353f;"></div>
<div style="position:absolute;left:197px;top:113px;width:17px;height:25px;background:#3f4654;"></div>
<div style="position:absolute;left:215px;top:113px;width:74px;height:25px;background:#3f4654;"></div>
<div style="position:absolute;left:292px;top:113px;width:15px;height:25px;background:#3f4654;"></div>
<div style="position:absolute;left:309px;top:113px;width:16px;height:25px;background:#3f4654;"></div>
<div style="position:absolute;left:327px;top:113px;width:16px;height:25px;background:#3f4654;"></div>
<div style="position:absolute;left:345px;top:113px;width:16px;height:25px;background:#3f4654;"></div>
<div style="position:absolute;left:363px;top:113px;width:47px;height:25px;background:#3f4654;"></div>
<div style="position:absolute;left:411px;top:113px;width:63px;height:25px;background:#3f4654;"></div>
<div style="position:absolute;left:475px;top:113px;width:66px;height:25px;background:#3f4654;"></div>
<div style="position:absolute;left:543px;top:113px;width:52px;height:25px;background:#3f4654;"></div>
<div style="position:absolute;left:597px;top:113px;width:16px;height:25px;background:#3f4654;"></div>
<div style="position:absolute;left:615px;top:113px;width:77px;height:25px;background:#3f4654;"></div>
<div style="position:absolute;left:200px;top:119.67px;font-family:'Liberation Sans',sans-serif;font-size:12.2px;line-height:1;color:#dfe2e8;font-weight:400;white-space:nowrap;letter-spacing:-0.3px;">S..</div>
<div style="position:absolute;left:219px;top:119.67px;font-family:'Liberation Sans',sans-serif;font-size:12.2px;line-height:1;color:#dfe2e8;font-weight:400;white-space:nowrap;letter-spacing:-0.3px;">Name</div>
<div style="position:absolute;left:295px;top:119.67px;font-family:'Liberation Sans',sans-serif;font-size:12.2px;line-height:1;color:#dfe2e8;font-weight:400;white-space:nowrap;letter-spacing:-0.3px;">O.</div>
<div style="position:absolute;left:312px;top:119.67px;font-family:'Liberation Sans',sans-serif;font-size:12.2px;line-height:1;color:#dfe2e8;font-weight:400;white-space:nowrap;letter-spacing:-0.3px;">F..</div>
<div style="position:absolute;left:330px;top:119.67px;font-family:'Liberation Sans',sans-serif;font-size:12.2px;line-height:1;color:#dfe2e8;font-weight:400;white-space:nowrap;letter-spacing:-0.3px;">L..</div>
<div style="position:absolute;left:348px;top:119.67px;font-family:'Liberation Sans',sans-serif;font-size:12.2px;line-height:1;color:#dfe2e8;font-weight:400;white-space:nowrap;letter-spacing:-0.3px;">P..</div>
<div style="position:absolute;left:367px;top:119.67px;font-family:'Liberation Sans',sans-serif;font-size:12.2px;line-height:1;color:#dfe2e8;font-weight:400;white-space:nowrap;letter-spacing:-0.3px;">Color</div>
<div style="position:absolute;left:415px;top:119.67px;font-family:'Liberation Sans',sans-serif;font-size:12.2px;line-height:1;color:#dfe2e8;font-weight:400;white-space:nowrap;letter-spacing:-0.3px;">Linetype</div>
<div style="position:absolute;left:479px;top:119.67px;font-family:'Liberation Sans',sans-serif;font-size:12.2px;line-height:1;color:#dfe2e8;font-weight:400;white-space:nowrap;letter-spacing:-0.3px;">Lineweight</div>
<div style="position:absolute;left:547px;top:119.67px;font-family:'Liberation Sans',sans-serif;font-size:12.2px;line-height:1;color:#dfe2e8;font-weight:400;white-space:nowrap;letter-spacing:-0.3px;">Transp...</div>
<div style="position:absolute;left:600px;top:119.67px;font-family:'Liberation Sans',sans-serif;font-size:12.2px;line-height:1;color:#dfe2e8;font-weight:400;white-space:nowrap;letter-spacing:-0.3px;">N.</div>
<div style="position:absolute;left:619px;top:119.67px;font-family:'Liberation Sans',sans-serif;font-size:12.2px;line-height:1;color:#dfe2e8;font-weight:400;white-space:nowrap;letter-spacing:-0.3px;">Description</div>
<svg style="position:absolute;left:279px;top:122px;" width="10" height="6" viewBox="0 0 10 6"><path d="M0 5.5 H9 L4.5 0.5 Z" fill="#e0e3e8"/></svg>
<div style="position:absolute;left:289px;top:113px;width:2px;height:249px;background:#2c323c;"></div>
<div style="position:absolute;left:197px;top:176px;width:92px;height:19px;background:#5f6f8e;"></div>
<div style="position:absolute;left:292px;top:176px;width:404px;height:19px;background:#5f6f8e;"></div>
<svg style="position:absolute;left:201px;top:141px;" width="14" height="13" viewBox="0 0 14 13"><path d="M2 6.5 L5.5 10 L12 2.5" stroke="#5ed86a" stroke-width="2.2" fill="none"/></svg>
<div style="position:absolute;left:219px;top:142.17px;font-family:'Liberation Sans',sans-serif;font-size:12.2px;line-height:1;color:#e6e9ee;font-weight:400;white-space:nowrap;letter-spacing:-0.2px;">0</div>
<svg style="position:absolute;left:293px;top:140px;" width="13" height="16" viewBox="0 0 13 16"><circle cx="6.5" cy="6.5" r="5" fill="#f4cb6a"/><path d="M4.5 11 H8.5 L7.5 14 H5.5 Z" fill="#f4f4f4"/></svg>
<svg style="position:absolute;left:310px;top:140px;" width="15" height="15" viewBox="0 0 15 15"><circle cx="7.5" cy="7.5" r="4" fill="#f4cb6a"/><rect x="7" y="0.5" width="1" height="2.5" fill="#e8d090" transform="rotate(0 7.5 7.5)"/><rect x="7" y="0.5" width="1" height="2.5" fill="#e8d090" transform="rotate(45 7.5 7.5)"/><rect x="7" y="0.5" width="1" height="2.5" fill="#e8d090" transform="rotate(90 7.5 7.5)"/><rect x="7" y="0.5" width="1" height="2.5" fill="#e8d090" transform="rotate(135 7.5 7.5)"/><rect x="7" y="0.5" width="1" height="2.5" fill="#e8d090" transform="rotate(180 7.5 7.5)"/><rect x="7" y="0.5" width="1" height="2.5" fill="#e8d090" transform="rotate(225 7.5 7.5)"/><rect x="7" y="0.5" width="1" height="2.5" fill="#e8d090" transform="rotate(270 7.5 7.5)"/><rect x="7" y="0.5" width="1" height="2.5" fill="#e8d090" transform="rotate(315 7.5 7.5)"/></svg>
<svg style="position:absolute;left:328px;top:141px;" width="14" height="14" viewBox="0 0 14 14"><path d="M7 6 V4 C7 1.5 11.5 1.5 11.5 4 V5" stroke="#f0c860" stroke-width="1.5" fill="none"/><rect x="1.5" y="6" width="9" height="7.5" fill="#f0c860"/><rect x="5.3" y="8.5" width="1.4" height="3" fill="#8a6a20"/></svg>
<svg style="position:absolute;left:346px;top:141px;" width="15" height="14" viewBox="0 0 15 14"><rect x="3.5" y="1" width="8" height="4" fill="#eceef0"/><rect x="1" y="5" width="13" height="5.5" rx="1" fill="#e2e4e8"/><rect x="3.5" y="9" width="8" height="4" fill="#6aaee0"/></svg>
<div style="position:absolute;left:366px;top:140.5px;width:13px;height:14px;background:#fafafa;border:1px solid #22262c;"></div>
<div style="position:absolute;left:382px;top:142.34px;font-family:'Liberation Sans',sans-serif;font-size:12px;line-height:1;color:#e6e9ee;font-weight:400;white-space:nowrap;letter-spacing:-0.3px;">wh...</div>
<div style="position:absolute;left:415px;top:142.17px;font-family:'Liberation Sans',sans-serif;font-size:12.2px;line-height:1;color:#e6e9ee;font-weight:400;white-space:nowrap;letter-spacing:-0.3px;">Continu...</div>
<svg style="position:absolute;left:199px;top:162px;" width="16" height="9" viewBox="0 0 16 9"><path d="M1 7.5 L5.5 1.5 H14.5 L10 7.5 Z" fill="#8ccdf5"/></svg>
<div style="position:absolute;left:219px;top:161.17px;font-family:'Liberation Sans',sans-serif;font-size:12.2px;line-height:1;color:#e6e9ee;font-weight:400;white-space:nowrap;letter-spacing:-0.2px;">Outline</div>
<svg style="position:absolute;left:293px;top:159px;" width="13" height="16" viewBox="0 0 13 16"><circle cx="6.5" cy="6.5" r="5" fill="#f4cb6a"/><path d="M4.5 11 H8.5 L7.5 14 H5.5 Z" fill="#f4f4f4"/></svg>
<svg style="position:absolute;left:310px;top:159px;" width="15" height="15" viewBox="0 0 15 15"><circle cx="7.5" cy="7.5" r="4" fill="#f4cb6a"/><rect x="7" y="0.5" width="1" height="2.5" fill="#e8d090" transform="rotate(0 7.5 7.5)"/><rect x="7" y="0.5" width="1" height="2.5" fill="#e8d090" transform="rotate(45 7.5 7.5)"/><rect x="7" y="0.5" width="1" height="2.5" fill="#e8d090" transform="rotate(90 7.5 7.5)"/><rect x="7" y="0.5" width="1" height="2.5" fill="#e8d090" transform="rotate(135 7.5 7.5)"/><rect x="7" y="0.5" width="1" height="2.5" fill="#e8d090" transform="rotate(180 7.5 7.5)"/><rect x="7" y="0.5" width="1" height="2.5" fill="#e8d090" transform="rotate(225 7.5 7.5)"/><rect x="7" y="0.5" width="1" height="2.5" fill="#e8d090" transform="rotate(270 7.5 7.5)"/><rect x="7" y="0.5" width="1" height="2.5" fill="#e8d090" transform="rotate(315 7.5 7.5)"/></svg>
<svg style="position:absolute;left:328px;top:160px;" width="14" height="14" viewBox="0 0 14 14"><path d="M7 6 V4 C7 1.5 11.5 1.5 11.5 4 V5" stroke="#f0c860" stroke-width="1.5" fill="none"/><rect x="1.5" y="6" width="9" height="7.5" fill="#f0c860"/><rect x="5.3" y="8.5" width="1.4" height="3" fill="#8a6a20"/></svg>
<svg style="position:absolute;left:346px;top:160px;" width="15" height="14" viewBox="0 0 15 14"><rect x="3.5" y="1" width="8" height="4" fill="#eceef0"/><rect x="1" y="5" width="13" height="5.5" rx="1" fill="#e2e4e8"/><rect x="3.5" y="9" width="8" height="4" fill="#6aaee0"/></svg>
<div style="position:absolute;left:366px;top:159.5px;width:13px;height:14px;background:#fafafa;border:1px solid #22262c;"></div>
<div style="position:absolute;left:382px;top:161.34px;font-family:'Liberation Sans',sans-serif;font-size:12px;line-height:1;color:#e6e9ee;font-weight:400;white-space:nowrap;letter-spacing:-0.3px;">wh...</div>
<div style="position:absolute;left:415px;top:161.17px;font-family:'Liberation Sans',sans-serif;font-size:12.2px;line-height:1;color:#e6e9ee;font-weight:400;white-space:nowrap;letter-spacing:-0.3px;">Continu...</div>
<svg style="position:absolute;left:199px;top:181px;" width="16" height="9" viewBox="0 0 16 9"><path d="M1 7.5 L5.5 1.5 H14.5 L10 7.5 Z" fill="#8ccdf5"/></svg>
<div style="position:absolute;left:219px;top:180.17px;font-family:'Liberation Sans',sans-serif;font-size:12.2px;line-height:1;color:#e6e9ee;font-weight:400;white-space:nowrap;letter-spacing:-0.2px;">Dimension</div>
<svg style="position:absolute;left:293px;top:178px;" width="13" height="16" viewBox="0 0 13 16"><circle cx="6.5" cy="6.5" r="5" fill="#f4cb6a"/><path d="M4.5 11 H8.5 L7.5 14 H5.5 Z" fill="#f4f4f4"/></svg>
<svg style="position:absolute;left:310px;top:178px;" width="15" height="15" viewBox="0 0 15 15"><circle cx="7.5" cy="7.5" r="4" fill="#f4cb6a"/><rect x="7" y="0.5" width="1" height="2.5" fill="#e8d090" transform="rotate(0 7.5 7.5)"/><rect x="7" y="0.5" width="1" height="2.5" fill="#e8d090" transform="rotate(45 7.5 7.5)"/><rect x="7" y="0.5" width="1" height="2.5" fill="#e8d090" transform="rotate(90 7.5 7.5)"/><rect x="7" y="0.5" width="1" height="2.5" fill="#e8d090" transform="rotate(135 7.5 7.5)"/><rect x="7" y="0.5" width="1" height="2.5" fill="#e8d090" transform="rotate(180 7.5 7.5)"/><rect x="7" y="0.5" width="1" height="2.5" fill="#e8d090" transform="rotate(225 7.5 7.5)"/><rect x="7" y="0.5" width="1" height="2.5" fill="#e8d090" transform="rotate(270 7.5 7.5)"/><rect x="7" y="0.5" width="1" height="2.5" fill="#e8d090" transform="rotate(315 7.5 7.5)"/></svg>
<svg style="position:absolute;left:328px;top:179px;" width="14" height="14" viewBox="0 0 14 14"><path d="M7 6 V4 C7 1.5 11.5 1.5 11.5 4 V5" stroke="#f0c860" stroke-width="1.5" fill="none"/><rect x="1.5" y="6" width="9" height="7.5" fill="#f0c860"/><rect x="5.3" y="8.5" width="1.4" height="3" fill="#8a6a20"/></svg>
<svg style="position:absolute;left:346px;top:179px;" width="15" height="14" viewBox="0 0 15 14"><rect x="3.5" y="1" width="8" height="4" fill="#eceef0"/><rect x="1" y="5" width="13" height="5.5" rx="1" fill="#e2e4e8"/><rect x="3.5" y="9" width="8" height="4" fill="#6aaee0"/></svg>
<div style="position:absolute;left:366px;top:178.5px;width:13px;height:14px;background:#fafafa;border:1px solid #22262c;"></div>
<div style="position:absolute;left:382px;top:180.34px;font-family:'Liberation Sans',sans-serif;font-size:12px;line-height:1;color:#e6e9ee;font-weight:400;white-space:nowrap;letter-spacing:-0.3px;">wh...</div>
<div style="position:absolute;left:415px;top:180.17px;font-family:'Liberation Sans',sans-serif;font-size:12.2px;line-height:1;color:#e6e9ee;font-weight:400;white-space:nowrap;letter-spacing:-0.3px;">Continu...</div>
<svg style="position:absolute;left:199px;top:200px;" width="16" height="9" viewBox="0 0 16 9"><path d="M1 7.5 L5.5 1.5 H14.5 L10 7.5 Z" fill="#8ccdf5"/></svg>
<div style="position:absolute;left:219px;top:199.17px;font-family:'Liberation Sans',sans-serif;font-size:12.2px;line-height:1;color:#e6e9ee;font-weight:400;white-space:nowrap;letter-spacing:-0.2px;">Const Line</div>
<svg style="position:absolute;left:293px;top:197px;" width="13" height="16" viewBox="0 0 13 16"><circle cx="6.5" cy="6.5" r="5" fill="#f4cb6a"/><path d="M4.5 11 H8.5 L7.5 14 H5.5 Z" fill="#f4f4f4"/></svg>
<svg style="position:absolute;left:310px;top:197px;" width="15" height="15" viewBox="0 0 15 15"><circle cx="7.5" cy="7.5" r="4" fill="#f4cb6a"/><rect x="7" y="0.5" width="1" height="2.5" fill="#e8d090" transform="rotate(0 7.5 7.5)"/><rect x="7" y="0.5" width="1" height="2.5" fill="#e8d090" transform="rotate(45 7.5 7.5)"/><rect x="7" y="0.5" width="1" height="2.5" fill="#e8d090" transform="rotate(90 7.5 7.5)"/><rect x="7" y="0.5" width="1" height="2.5" fill="#e8d090" transform="rotate(135 7.5 7.5)"/><rect x="7" y="0.5" width="1" height="2.5" fill="#e8d090" transform="rotate(180 7.5 7.5)"/><rect x="7" y="0.5" width="1" height="2.5" fill="#e8d090" transform="rotate(225 7.5 7.5)"/><rect x="7" y="0.5" width="1" height="2.5" fill="#e8d090" transform="rotate(270 7.5 7.5)"/><rect x="7" y="0.5" width="1" height="2.5" fill="#e8d090" transform="rotate(315 7.5 7.5)"/></svg>
<svg style="position:absolute;left:328px;top:198px;" width="14" height="14" viewBox="0 0 14 14"><path d="M7 6 V4 C7 1.5 11.5 1.5 11.5 4 V5" stroke="#f0c860" stroke-width="1.5" fill="none"/><rect x="1.5" y="6" width="9" height="7.5" fill="#f0c860"/><rect x="5.3" y="8.5" width="1.4" height="3" fill="#8a6a20"/></svg>
<svg style="position:absolute;left:346px;top:198px;" width="15" height="14" viewBox="0 0 15 14"><rect x="3.5" y="1" width="8" height="4" fill="#eceef0"/><rect x="1" y="5" width="13" height="5.5" rx="1" fill="#e2e4e8"/><rect x="3.5" y="9" width="8" height="4" fill="#6aaee0"/></svg>
<div style="position:absolute;left:366px;top:197.5px;width:13px;height:14px;background:#fafafa;border:1px solid #22262c;"></div>
<div style="position:absolute;left:382px;top:199.34px;font-family:'Liberation Sans',sans-serif;font-size:12px;line-height:1;color:#e6e9ee;font-weight:400;white-space:nowrap;letter-spacing:-0.3px;">wh...</div>
<div style="position:absolute;left:415px;top:199.17px;font-family:'Liberation Sans',sans-serif;font-size:12.2px;line-height:1;color:#e6e9ee;font-weight:400;white-space:nowrap;letter-spacing:-0.3px;">Continu...</div>
<div style="position:absolute;left:477px;top:146px;width:21px;height:2px;background:#e8eaee;"></div>
<div style="position:absolute;left:502px;top:142.17px;font-family:'Liberation Sans',sans-serif;font-size:12.2px;line-height:1;color:#e6e9ee;font-weight:400;white-space:nowrap;letter-spacing:-0.3px;">Defa...</div>
<div style="position:absolute;left:546px;top:142.17px;font-family:'Liberation Sans',sans-serif;font-size:12.2px;line-height:1;color:#e6e9ee;font-weight:400;white-space:nowrap;">0</div>
<svg style="position:absolute;left:598px;top:141px;" width="14" height="12" viewBox="0 0 14 12"><rect x="2" y="1" width="9" height="10" fill="none" stroke="#b0b4ba" stroke-width="1.3"/><circle cx="10" cy="9" r="2.2" fill="#e8c050"/></svg>
<div style="position:absolute;left:197px;top:361.5px;width:499px;height:18.5px;background:#f0f0f0;"></div>
<div style="position:absolute;left:215px;top:362.5px;width:481px;height:17px;background:#cdcdcd;"></div>
<svg style="position:absolute;left:200px;top:365px;" width="10" height="12" viewBox="0 0 10 12"><path d="M7 2 L3 6 L7 10" stroke="#505050" stroke-width="1.6" fill="none"/></svg>
<div style="position:absolute;left:82px;top:401.34px;font-family:'Liberation Sans',sans-serif;font-size:12px;line-height:1;color:#dde1e7;font-weight:400;white-space:nowrap;letter-spacing:-0.05px;">All: 4 layers displayed of 4 total layers</div>
<div style="position:absolute;left:458px;top:152px;width:364px;height:411px;background:#2a2a2a;"></div>
<div style="position:absolute;left:459px;top:153px;width:362px;height:409px;background:#f0f0f0;"></div>
<div style="position:absolute;left:459px;top:153px;width:362px;height:31px;background:#ffffff;"></div>
<svg style="position:absolute;left:466px;top:159px;" width="16" height="16" viewBox="0 0 16 16"><rect x="0" y="0" width="16" height="16" fill="#f6e0e2"/><path d="M2 15 L6.8 1.5 H9.8 L14.3 15 H11.2 L10.3 12 L5.6 13 L5 15 Z M6.5 10.5 L9.8 9.8 L8.5 5 Z" fill="#b3192a" fill-rule="evenodd"/></svg>
<div style="position:absolute;left:486px;top:162.67px;font-family:'Liberation Sans',sans-serif;font-size:12.2px;line-height:1;color:#262626;font-weight:400;white-space:nowrap;letter-spacing:-0.15px;">Select Color</div>
<svg style="position:absolute;left:798px;top:161px;" width="13" height="13" viewBox="0 0 13 13"><path d="M1 1 L12 12 M12 1 L1 12" stroke="#505050" stroke-width="1"/></svg>
<div style="position:absolute;left:562px;top:196px;width:95px;height:18px;background:#f0f0f0;border:1px solid #d9d9d9;border-bottom:none;"></div>
<div style="position:absolute;left:656px;top:196px;width:96px;height:18px;background:#f0f0f0;border:1px solid #d9d9d9;border-bottom:none;"></div>
<div style="position:absolute;left:464px;top:213px;width:350px;height:306px;background:#ffffff;border:1px solid #d9d9d9;"></div>
<div style="position:absolute;left:464px;top:194px;width:99px;height:21px;background:#ffffff;border:1px solid #d9d9d9;border-bottom:none;"></div>
<div style="position:absolute;left:487px;top:198.03px;font-family:'Liberation Sans',sans-serif;font-size:10.6px;line-height:1;color:#262626;font-weight:400;white-space:nowrap;">Index Color</div>
<div style="position:absolute;left:584px;top:199.53px;font-family:'Liberation Sans',sans-serif;font-size:10.6px;line-height:1;color:#262626;font-weight:400;white-space:nowrap;">True Color</div>
<div style="position:absolute;left:676px;top:199.53px;font-family:'Liberation Sans',sans-serif;font-size:10.6px;line-height:1;color:#262626;font-weight:400;white-space:nowrap;">Color Books</div>
<div style="position:absolute;left:474px;top:216.69px;font-family:'Liberation Sans',sans-serif;font-size:11px;line-height:1;color:#262626;font-weight:400;white-space:nowrap;letter-spacing:-0.25px;">AutoCAD Color Index (ACI):</div>
<svg style="position:absolute;left:473px;top:232px;" width="334" height="143" viewBox="0 0 334 143"><rect x="0" y="0" width="332.7" height="67.4" fill="#d2d2d2"/><rect x="0" y="74" width="332.7" height="67.4" fill="#d2d2d2"/><rect x="0.00" y="0.00" width="12.5" height="12.6" fill="#260000"/><rect x="13.92" y="0.00" width="12.5" height="12.6" fill="#260900"/><rect x="27.84" y="0.00" width="12.5" height="12.6" fill="#261300"/><rect x="41.76" y="0.00" width="12.5" height="12.6" fill="#261c00"/><rect x="55.68" y="0.00" width="12.5" height="12.6" fill="#262600"/><rect x="69.60" y="0.00" width="12.5" height="12.6" fill="#1c2600"/><rect x="83.52" y="0.00" width="12.5" height="12.6" fill="#132600"/><rect x="97.44" y="0.00" width="12.5" height="12.6" fill="#092600"/><rect x="111.36" y="0.00" width="12.5" height="12.6" fill="#002600"/><rect x="125.28" y="0.00" width="12.5" height="12.6" fill="#002609"/><rect x="139.20" y="0.00" width="12.5" height="12.6" fill="#002613"/><rect x="153.12" y="0.00" width="12.5" height="12.6" fill="#00261c"/><rect x="167.04" y="0.00" width="12.5" height="12.6" fill="#002626"/><rect x="180.96" y="0.00" width="12.5" height="12.6" fill="#001c26"/><rect x="194.88" y="0.00" width="12.5" height="12.6" fill="#001326"/><rect x="208.80" y="0.00" width="12.5" height="12.6" fill="#000926"/><rect x="222.72" y="0.00" width="12.5" height="12.6" fill="#000026"/><rect x="236.64" y="0.00" width="12.5" height="12.6" fill="#090026"/><rect x="250.56" y="0.00" width="12.5" height="12.6" fill="#130026"/><rect x="264.48" y="0.00" width="12.5" height="12.6" fill="#1c0026"/><rect x="278.40" y="0.00" width="12.5" height="12.6" fill="#260026"/><rect x="292.32" y="0.00" width="12.5" height="12.6" fill="#26001c"/><rect x="306.24" y="0.00" width="12.5" height="12.6" fill="#260013"/><rect x="320.16" y="0.00" width="12.5" height="12.6" fill="#260009"/><rect x="0.00" y="13.55" width="12.5" height="12.6" fill="#4c0000"/><rect x="13.92" y="13.55" width="12.5" height="12.6" fill="#4c1300"/><rect x="27.84" y="13.55" width="12.5" height="12.6" fill="#4c2600"/><rect x="41.76" y="13.55" width="12.5" height="12.6" fill="#4c3900"/><rect x="55.68" y="13.55" width="12.5" height="12.6" fill="#4c4c00"/><rect x="69.60" y="13.55" width="12.5" height="12.6" fill="#394c00"/><rect x="83.52" y="13.55" width="12.5" height="12.6" fill="#264c00"/><rect x="97.44" y="13.55" width="12.5" height="12.6" fill="#134c00"/><rect x="111.36" y="13.55" width="12.5" height="12.6" fill="#004c00"/><rect x="125.28" y="13.55" width="12.5" height="12.6" fill="#004c13"/><rect x="139.20" y="13.55" width="12.5" height="12.6" fill="#004c26"/><rect x="153.12" y="13.55" width="12.5" height="12.6" fill="#004c39"/><rect x="167.04" y="13.55" width="12.5" height="12.6" fill="#004c4c"/><rect x="180.96" y="13.55" width="12.5" height="12.6" fill="#00394c"/><rect x="194.88" y="13.55" width="12.5" height="12.6" fill="#00264c"/><rect x="208.80" y="13.55" width="12.5" height="12.6" fill="#00134c"/><rect x="222.72" y="13.55" width="12.5" height="12.6" fill="#00004c"/><rect x="236.64" y="13.55" width="12.5" height="12.6" fill="#13004c"/><rect x="250.56" y="13.55" width="12.5" height="12.6" fill="#26004c"/><rect x="264.48" y="13.55" width="12.5" height="12.6" fill="#39004c"/><rect x="278.40" y="13.55" width="12.5" height="12.6" fill="#4c004c"/><rect x="292.32" y="13.55" width="12.5" height="12.6" fill="#4c0039"/><rect x="306.24" y="13.55" width="12.5" height="12.6" fill="#4c0026"/><rect x="320.16" y="13.55" width="12.5" height="12.6" fill="#4c0013"/><rect x="0.00" y="27.10" width="12.5" height="12.6" fill="#7f0000"/><rect x="13.92" y="27.10" width="12.5" height="12.6" fill="#7f1f00"/><rect x="27.84" y="27.10" width="12.5" height="12.6" fill="#7f3f00"/><rect x="41.76" y="27.10" width="12.5" height="12.6" fill="#7f5f00"/><rect x="55.68" y="27.10" width="12.5" height="12.6" fill="#7f7f00"/><rect x="69.60" y="27.10" width="12.5" height="12.6" fill="#5f7f00"/><rect x="83.52" y="27.10" width="12.5" height="12.6" fill="#3f7f00"/><rect x="97.44" y="27.10" width="12.5" height="12.6" fill="#1f7f00"/><rect x="111.36" y="27.10" width="12.5" height="12.6" fill="#007f00"/><rect x="125.28" y="27.10" width="12.5" height="12.6" fill="#007f1f"/><rect x="139.20" y="27.10" width="12.5" height="12.6" fill="#007f3f"/><rect x="153.12" y="27.10" width="12.5" height="12.6" fill="#007f5f"/><rect x="167.04" y="27.10" width="12.5" height="12.6" fill="#007f7f"/><rect x="180.96" y="27.10" width="12.5" height="12.6" fill="#005f7f"/><rect x="194.88" y="27.10" width="12.5" height="12.6" fill="#003f7f"/><rect x="208.80" y="27.10" width="12.5" height="12.6" fill="#001f7f"/><rect x="222.72" y="27.10" width="12.5" height="12.6" fill="#00007f"/><rect x="236.64" y="27.10" width="12.5" height="12.6" fill="#1f007f"/><rect x="250.56" y="27.10" width="12.5" height="12.6" fill="#3f007f"/><rect x="264.48" y="27.10" width="12.5" height="12.6" fill="#5f007f"/><rect x="278.40" y="27.10" width="12.5" height="12.6" fill="#7f007f"/><rect x="292.32" y="27.10" width="12.5" height="12.6" fill="#7f005f"/><rect x="306.24" y="27.10" width="12.5" height="12.6" fill="#7f003f"/><rect x="320.16" y="27.10" width="12.5" height="12.6" fill="#7f001f"/><rect x="0.00" y="40.65" width="12.5" height="12.6" fill="#a50000"/><rect x="13.92" y="40.65" width="12.5" height="12.6" fill="#a52900"/><rect x="27.84" y="40.65" width="12.5" height="12.6" fill="#a55200"/><rect x="41.76" y="40.65" width="12.5" height="12.6" fill="#a57c00"/><rect x="55.68" y="40.65" width="12.5" height="12.6" fill="#a5a500"/><rect x="69.60" y="40.65" width="12.5" height="12.6" fill="#7ca500"/><rect x="83.52" y="40.65" width="12.5" height="12.6" fill="#52a500"/><rect x="97.44" y="40.65" width="12.5" height="12.6" fill="#29a500"/><rect x="111.36" y="40.65" width="12.5" height="12.6" fill="#00a500"/><rect x="125.28" y="40.65" width="12.5" height="12.6" fill="#00a529"/><rect x="139.20" y="40.65" width="12.5" height="12.6" fill="#00a552"/><rect x="153.12" y="40.65" width="12.5" height="12.6" fill="#00a57c"/><rect x="167.04" y="40.65" width="12.5" height="12.6" fill="#00a5a5"/><rect x="180.96" y="40.65" width="12.5" height="12.6" fill="#007ca5"/><rect x="194.88" y="40.65" width="12.5" height="12.6" fill="#0052a5"/><rect x="208.80" y="40.65" width="12.5" height="12.6" fill="#0029a5"/><rect x="222.72" y="40.65" width="12.5" height="12.6" fill="#0000a5"/><rect x="236.64" y="40.65" width="12.5" height="12.6" fill="#2900a5"/><rect x="250.56" y="40.65" width="12.5" height="12.6" fill="#5200a5"/><rect x="264.48" y="40.65" width="12.5" height="12.6" fill="#7c00a5"/><rect x="278.40" y="40.65" width="12.5" height="12.6" fill="#a500a5"/><rect x="292.32" y="40.65" width="12.5" height="12.6" fill="#a5007c"/><rect x="306.24" y="40.65" width="12.5" height="12.6" fill="#a50052"/><rect x="320.16" y="40.65" width="12.5" height="12.6" fill="#a50029"/><rect x="0.00" y="54.20" width="12.5" height="13.2" fill="#ff0000"/><rect x="13.92" y="54.20" width="12.5" height="13.2" fill="#ff3f00"/><rect x="27.84" y="54.20" width="12.5" height="13.2" fill="#ff7f00"/><rect x="41.76" y="54.20" width="12.5" height="13.2" fill="#ffbf00"/><rect x="55.68" y="54.20" width="12.5" height="13.2" fill="#ffff00"/><rect x="69.60" y="54.20" width="12.5" height="13.2" fill="#bfff00"/><rect x="83.52" y="54.20" width="12.5" height="13.2" fill="#7fff00"/><rect x="97.44" y="54.20" width="12.5" height="13.2" fill="#3fff00"/><rect x="111.36" y="54.20" width="12.5" height="13.2" fill="#00ff00"/><rect x="125.28" y="54.20" width="12.5" height="13.2" fill="#00ff3f"/><rect x="139.20" y="54.20" width="12.5" height="13.2" fill="#00ff7f"/><rect x="153.12" y="54.20" width="12.5" height="13.2" fill="#00ffbf"/><rect x="167.04" y="54.20" width="12.5" height="13.2" fill="#00ffff"/><rect x="180.96" y="54.20" width="12.5" height="13.2" fill="#00bfff"/><rect x="194.88" y="54.20" width="12.5" height="13.2" fill="#007fff"/><rect x="208.80" y="54.20" width="12.5" height="13.2" fill="#003fff"/><rect x="222.72" y="54.20" width="12.5" height="13.2" fill="#0000ff"/><rect x="236.64" y="54.20" width="12.5" height="13.2" fill="#3f00ff"/><rect x="250.56" y="54.20" width="12.5" height="13.2" fill="#7f00ff"/><rect x="264.48" y="54.20" width="12.5" height="13.2" fill="#bf00ff"/><rect x="278.40" y="54.20" width="12.5" height="13.2" fill="#ff00ff"/><rect x="292.32" y="54.20" width="12.5" height="13.2" fill="#ff00bf"/><rect x="306.24" y="54.20" width="12.5" height="13.2" fill="#ff007f"/><rect x="320.16" y="54.20" width="12.5" height="13.2" fill="#ff003f"/><rect x="0.00" y="74.00" width="12.5" height="12.6" fill="#ff7f7f"/><rect x="13.92" y="74.00" width="12.5" height="12.6" fill="#ff9f7f"/><rect x="27.84" y="74.00" width="12.5" height="12.6" fill="#ffbf7f"/><rect x="41.76" y="74.00" width="12.5" height="12.6" fill="#ffdf7f"/><rect x="55.68" y="74.00" width="12.5" height="12.6" fill="#ffff7f"/><rect x="69.60" y="74.00" width="12.5" height="12.6" fill="#dfff7f"/><rect x="83.52" y="74.00" width="12.5" height="12.6" fill="#bfff7f"/><rect x="97.44" y="74.00" width="12.5" height="12.6" fill="#9fff7f"/><rect x="111.36" y="74.00" width="12.5" height="12.6" fill="#7fff7f"/><rect x="125.28" y="74.00" width="12.5" height="12.6" fill="#7fff9f"/><rect x="139.20" y="74.00" width="12.5" height="12.6" fill="#7fffbf"/><rect x="153.12" y="74.00" width="12.5" height="12.6" fill="#7fffdf"/><rect x="167.04" y="74.00" width="12.5" height="12.6" fill="#7fffff"/><rect x="180.96" y="74.00" width="12.5" height="12.6" fill="#7fdfff"/><rect x="194.88" y="74.00" width="12.5" height="12.6" fill="#7fbfff"/><rect x="208.80" y="74.00" width="12.5" height="12.6" fill="#7f9fff"/><rect x="222.72" y="74.00" width="12.5" height="12.6" fill="#7f7fff"/><rect x="236.64" y="74.00" width="12.5" height="12.6" fill="#9f7fff"/><rect x="250.56" y="74.00" width="12.5" height="12.6" fill="#bf7fff"/><rect x="264.48" y="74.00" width="12.5" height="12.6" fill="#df7fff"/><rect x="278.40" y="74.00" width="12.5" height="12.6" fill="#ff7fff"/><rect x="292.32" y="74.00" width="12.5" height="12.6" fill="#ff7fdf"/><rect x="306.24" y="74.00" width="12.5" height="12.6" fill="#ff7fbf"/><rect x="320.16" y="74.00" width="12.5" height="12.6" fill="#ff7f9f"/><rect x="0.00" y="87.55" width="12.5" height="12.6" fill="#a55252"/><rect x="13.92" y="87.55" width="12.5" height="12.6" fill="#a56752"/><rect x="27.84" y="87.55" width="12.5" height="12.6" fill="#a57c52"/><rect x="41.76" y="87.55" width="12.5" height="12.6" fill="#a59052"/><rect x="55.68" y="87.55" width="12.5" height="12.6" fill="#a5a552"/><rect x="69.60" y="87.55" width="12.5" height="12.6" fill="#90a552"/><rect x="83.52" y="87.55" width="12.5" height="12.6" fill="#7ca552"/><rect x="97.44" y="87.55" width="12.5" height="12.6" fill="#67a552"/><rect x="111.36" y="87.55" width="12.5" height="12.6" fill="#52a552"/><rect x="125.28" y="87.55" width="12.5" height="12.6" fill="#52a567"/><rect x="139.20" y="87.55" width="12.5" height="12.6" fill="#52a57c"/><rect x="153.12" y="87.55" width="12.5" height="12.6" fill="#52a590"/><rect x="167.04" y="87.55" width="12.5" height="12.6" fill="#52a5a5"/><rect x="180.96" y="87.55" width="12.5" height="12.6" fill="#5290a5"/><rect x="194.88" y="87.55" width="12.5" height="12.6" fill="#527ca5"/><rect x="208.80" y="87.55" width="12.5" height="12.6" fill="#5267a5"/><rect x="222.72" y="87.55" width="12.5" height="12.6" fill="#5252a5"/><rect x="236.64" y="87.55" width="12.5" height="12.6" fill="#6752a5"/><rect x="250.56" y="87.55" width="12.5" height="12.6" fill="#7c52a5"/><rect x="264.48" y="87.55" width="12.5" height="12.6" fill="#9052a5"/><rect x="278.40" y="87.55" width="12.5" height="12.6" fill="#a552a5"/><rect x="292.32" y="87.55" width="12.5" height="12.6" fill="#a55290"/><rect x="306.24" y="87.55" width="12.5" height="12.6" fill="#a5527c"/><rect x="320.16" y="87.55" width="12.5" height="12.6" fill="#a55267"/><rect x="0.00" y="101.10" width="12.5" height="12.6" fill="#7f3f3f"/><rect x="13.92" y="101.10" width="12.5" height="12.6" fill="#7f4f3f"/><rect x="27.84" y="101.10" width="12.5" height="12.6" fill="#7f5f3f"/><rect x="41.76" y="101.10" width="12.5" height="12.6" fill="#7f6f3f"/><rect x="55.68" y="101.10" width="12.5" height="12.6" fill="#7f7f3f"/><rect x="69.60" y="101.10" width="12.5" height="12.6" fill="#6f7f3f"/><rect x="83.52" y="101.10" width="12.5" height="12.6" fill="#5f7f3f"/><rect x="97.44" y="101.10" width="12.5" height="12.6" fill="#4f7f3f"/><rect x="111.36" y="101.10" width="12.5" height="12.6" fill="#3f7f3f"/><rect x="125.28" y="101.10" width="12.5" height="12.6" fill="#3f7f4f"/><rect x="139.20" y="101.10" width="12.5" height="12.6" fill="#3f7f5f"/><rect x="153.12" y="101.10" width="12.5" height="12.6" fill="#3f7f6f"/><rect x="167.04" y="101.10" width="12.5" height="12.6" fill="#3f7f7f"/><rect x="180.96" y="101.10" width="12.5" height="12.6" fill="#3f6f7f"/><rect x="194.88" y="101.10" width="12.5" height="12.6" fill="#3f5f7f"/><rect x="208.80" y="101.10" width="12.5" height="12.6" fill="#3f4f7f"/><rect x="222.72" y="101.10" width="12.5" height="12.6" fill="#3f3f7f"/><rect x="236.64" y="101.10" width="12.5" height="12.6" fill="#4f3f7f"/><rect x="250.56" y="101.10" width="12.5" height="12.6" fill="#5f3f7f"/><rect x="264.48" y="101.10" width="12.5" height="12.6" fill="#6f3f7f"/><rect x="278.40" y="101.10" width="12.5" height="12.6" fill="#7f3f7f"/><rect x="292.32" y="101.10" width="12.5" height="12.6" fill="#7f3f6f"/><rect x="306.24" y="101.10" width="12.5" height="12.6" fill="#7f3f5f"/><rect x="320.16" y="101.10" width="12.5" height="12.6" fill="#7f3f4f"/><rect x="0.00" y="114.65" width="12.5" height="12.6" fill="#4c2626"/><rect x="13.92" y="114.65" width="12.5" height="12.6" fill="#4c2f26"/><rect x="27.84" y="114.65" width="12.5" height="12.6" fill="#4c3926"/><rect x="41.76" y="114.65" width="12.5" height="12.6" fill="#4c4226"/><rect x="55.68" y="114.65" width="12.5" height="12.6" fill="#4c4c26"/><rect x="69.60" y="114.65" width="12.5" height="12.6" fill="#424c26"/><rect x="83.52" y="114.65" width="12.5" height="12.6" fill="#394c26"/><rect x="97.44" y="114.65" width="12.5" height="12.6" fill="#2f4c26"/><rect x="111.36" y="114.65" width="12.5" height="12.6" fill="#264c26"/><rect x="125.28" y="114.65" width="12.5" height="12.6" fill="#264c2f"/><rect x="139.20" y="114.65" width="12.5" height="12.6" fill="#264c39"/><rect x="153.12" y="114.65" width="12.5" height="12.6" fill="#264c42"/><rect x="167.04" y="114.65" width="12.5" height="12.6" fill="#264c4c"/><rect x="180.96" y="114.65" width="12.5" height="12.6" fill="#2d4a8a"/><rect x="194.88" y="114.65" width="12.5" height="12.6" fill="#2b3d8c"/><rect x="208.80" y="114.65" width="12.5" height="12.6" fill="#2a3290"/><rect x="222.72" y="114.65" width="12.5" height="12.6" fill="#2a2a90"/><rect x="236.64" y="114.65" width="12.5" height="12.6" fill="#30259a"/><rect x="250.56" y="114.65" width="12.5" height="12.6" fill="#3a2095"/><rect x="264.48" y="114.65" width="12.5" height="12.6" fill="#42264c"/><rect x="278.40" y="114.65" width="12.5" height="12.6" fill="#4c264c"/><rect x="292.32" y="114.65" width="12.5" height="12.6" fill="#4c2642"/><rect x="306.24" y="114.65" width="12.5" height="12.6" fill="#4c2639"/><rect x="320.16" y="114.65" width="12.5" height="12.6" fill="#4c262f"/><rect x="0.00" y="128.20" width="12.5" height="13.2" fill="#261313"/><rect x="13.92" y="128.20" width="12.5" height="13.2" fill="#261813"/><rect x="27.84" y="128.20" width="12.5" height="13.2" fill="#261c13"/><rect x="41.76" y="128.20" width="12.5" height="13.2" fill="#262113"/><rect x="55.68" y="128.20" width="12.5" height="13.2" fill="#262613"/><rect x="69.60" y="128.20" width="12.5" height="13.2" fill="#212613"/><rect x="83.52" y="128.20" width="12.5" height="13.2" fill="#1c2613"/><rect x="97.44" y="128.20" width="12.5" height="13.2" fill="#182613"/><rect x="111.36" y="128.20" width="12.5" height="13.2" fill="#132613"/><rect x="125.28" y="128.20" width="12.5" height="13.2" fill="#1f7a22"/><rect x="139.20" y="128.20" width="12.5" height="13.2" fill="#1f7a22"/><rect x="153.12" y="128.20" width="12.5" height="13.2" fill="#1f6a62"/><rect x="167.04" y="128.20" width="12.5" height="13.2" fill="#1f6a62"/><rect x="180.96" y="128.20" width="12.5" height="13.2" fill="#1f6a62"/><rect x="194.88" y="128.20" width="12.5" height="13.2" fill="#1c1c62"/><rect x="208.80" y="128.20" width="12.5" height="13.2" fill="#1c1c62"/><rect x="222.72" y="128.20" width="12.5" height="13.2" fill="#1c1c62"/><rect x="236.64" y="128.20" width="12.5" height="13.2" fill="#1c1c62"/><rect x="250.56" y="128.20" width="12.5" height="13.2" fill="#1c1c62"/><rect x="264.48" y="128.20" width="12.5" height="13.2" fill="#5a0c5a"/><rect x="278.40" y="128.20" width="12.5" height="13.2" fill="#5a0c5a"/><rect x="292.32" y="128.20" width="12.5" height="13.2" fill="#5a0c5a"/><rect x="306.24" y="128.20" width="12.5" height="13.2" fill="#5c0c1c"/><rect x="320.16" y="128.20" width="12.5" height="13.2" fill="#5c0c1c"/></svg>
<div style="position:absolute;left:498px;top:284px;width:17px;height:18px;background:transparent;border:2px solid #1a1a1a;"></div>
<div style="position:absolute;left:500px;top:286px;width:13px;height:14px;background:transparent;border:1px solid #f6c89a;"></div>
<div style="position:absolute;left:472px;top:401px;width:166px;height:27px;background:#f4f4f4;"></div>
<div style="position:absolute;left:472px;top:430px;width:112px;height:26px;background:#f4f4f4;"></div>
<div style="position:absolute;left:474px;top:403px;width:17px;height:22px;background:#ff0000;"></div>
<div style="position:absolute;left:492px;top:403px;width:17px;height:22px;background:#ffff00;"></div>
<div style="position:absolute;left:510px;top:403px;width:17px;height:22px;background:#00ff00;"></div>
<div style="position:absolute;left:528px;top:403px;width:17px;height:22px;background:#00ffff;"></div>
<div style="position:absolute;left:546px;top:403px;width:17px;height:22px;background:#0000ff;"></div>
<div style="position:absolute;left:564px;top:403px;width:17px;height:22px;background:#ff00ff;"></div>
<div style="position:absolute;left:582px;top:403px;width:17px;height:22px;background:#ffffff;"></div>
<div style="position:absolute;left:600px;top:403px;width:17px;height:22px;background:#808080;"></div>
<div style="position:absolute;left:618px;top:403px;width:17px;height:22px;background:#c0c0c0;"></div>
<div style="position:absolute;left:474px;top:432px;width:17px;height:21.5px;background:#000000;"></div>
<div style="position:absolute;left:492px;top:432px;width:17px;height:21.5px;background:#6b6b6b;"></div>
<div style="position:absolute;left:510px;top:432px;width:17px;height:21.5px;background:#707070;"></div>
<div style="position:absolute;left:528px;top:432px;width:17px;height:21.5px;background:#999999;"></div>
<div style="position:absolute;left:546px;top:432px;width:17px;height:21.5px;background:#c8c8c8;"></div>
<div style="position:absolute;left:564px;top:432px;width:17px;height:21.5px;background:#ffffff;"></div>
<div style="position:absolute;left:653px;top:403px;width:72px;height:21.5px;background:#cccccc;"></div>
<div style="position:absolute;left:670px;top:408.69px;font-family:'Liberation Sans',sans-serif;font-size:11px;line-height:1;color:#7a7a7a;font-weight:400;white-space:nowrap;letter-spacing:-0.3px;">By<u>L</u>ayer</div>
<div style="position:absolute;left:730px;top:403px;width:72px;height:21.5px;background:#cccccc;"></div>
<div style="position:absolute;left:747px;top:408.69px;font-family:'Liberation Sans',sans-serif;font-size:11px;line-height:1;color:#7a7a7a;font-weight:400;white-space:nowrap;letter-spacing:-0.3px;">ByBloc<u>k</u></div>
<div style="position:absolute;left:474px;top:467.19px;font-family:'Liberation Sans',sans-serif;font-size:11px;line-height:1;color:#262626;font-weight:400;white-space:nowrap;">Color:</div>
<div style="position:absolute;left:474px;top:482px;width:189px;height:21px;background:#ffffff;border:1px solid #7a7a7a;"></div>
<div style="position:absolute;left:476.5px;top:486.19px;font-family:'Liberation Sans',sans-serif;font-size:11px;line-height:1;color:#262626;font-weight:400;white-space:nowrap;">30</div>
<div style="position:absolute;left:753px;top:436px;width:32px;height:37px;background:#ffffff;border:1px solid #a0a0a0;"></div>
<div style="position:absolute;left:721px;top:449px;width:51px;height:55px;background:#f07d0b;border:1px solid #e6d0c0;"></div>
<div style="position:absolute;left:579px;top:529px;width:74px;height:23.5px;background:#e1e1e1;border:2px solid #3f82d0;"></div>
<div style="position:absolute;left:608px;top:535.27px;font-family:'Liberation Sans',sans-serif;font-size:11.5px;line-height:1;color:#262626;font-weight:400;white-space:nowrap;">OK</div>
<div style="position:absolute;left:657px;top:529px;width:74px;height:23.5px;background:#e1e1e1;border:1px solid #b8b8b8;"></div>
<div style="position:absolute;left:678px;top:535.27px;font-family:'Liberation Sans',sans-serif;font-size:11.5px;line-height:1;color:#262626;font-weight:400;white-space:nowrap;">Cancel</div>
<div style="position:absolute;left:735px;top:529px;width:73.5px;height:23.5px;background:#e1e1e1;border:1px solid #b8b8b8;"></div>
<div style="position:absolute;left:760px;top:535.27px;font-family:'Liberation Sans',sans-serif;font-size:11.5px;line-height:1;color:#262626;font-weight:400;white-space:nowrap;"><u>H</u>elp</div>
<svg style="position:absolute;left:651px;top:570px;" width="16" height="24" viewBox="0 0 16 24"><path d="M1.5 1.5 V18 L5.5 14 L8.5 21 L11 20 L8 13 H13.5 Z" fill="#ffffff" stroke="#222" stroke-width="1"/></svg>
</body></html>
